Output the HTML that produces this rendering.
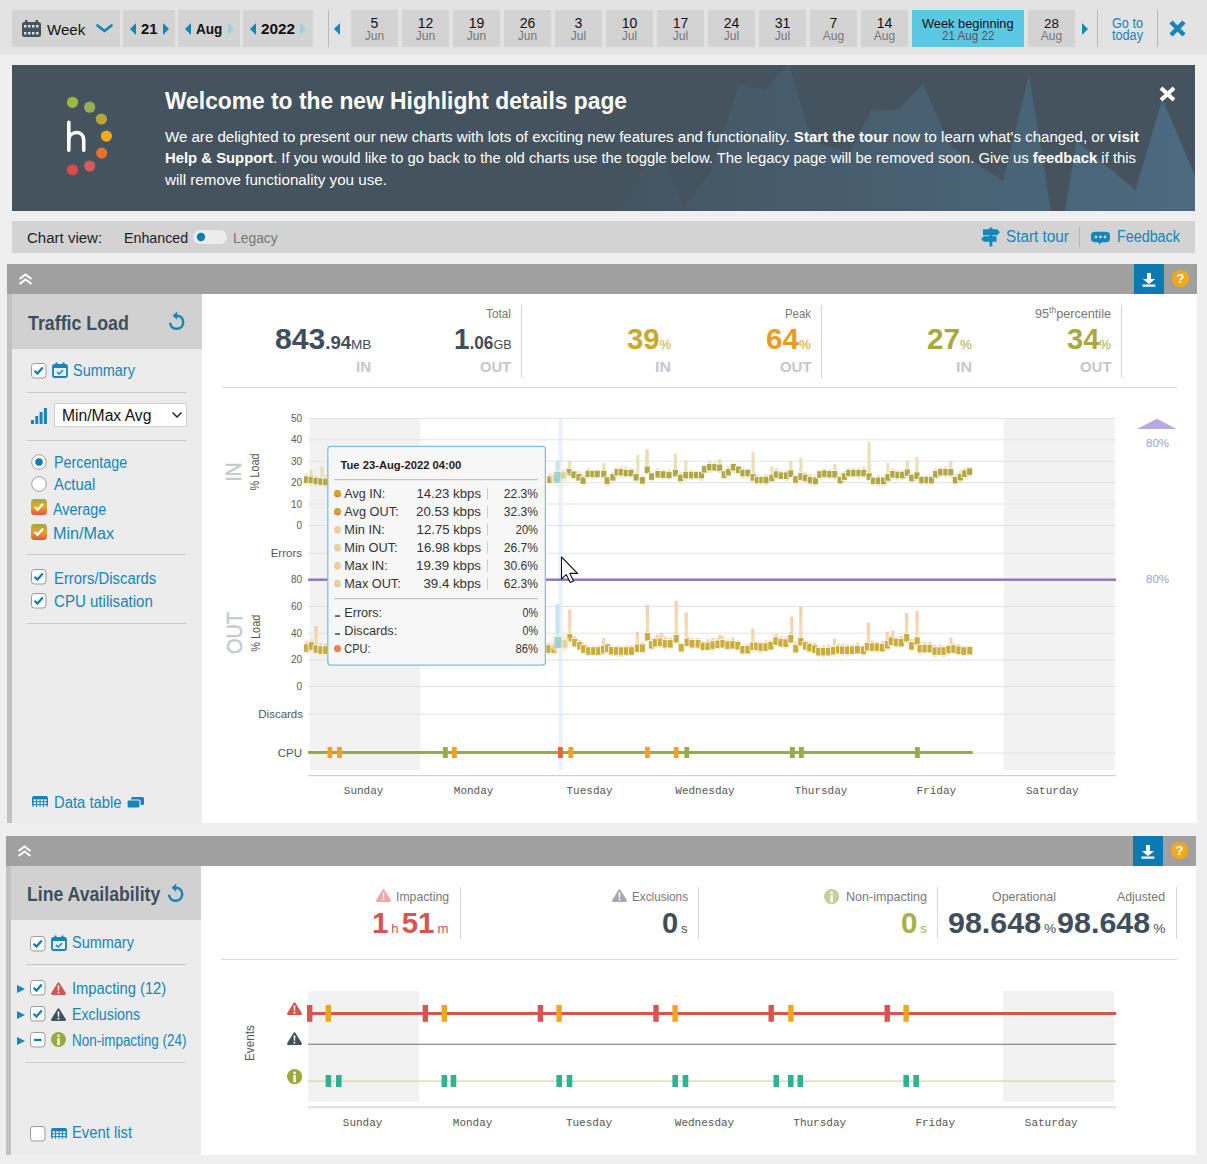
<!DOCTYPE html>
<html><head><meta charset="utf-8"><title>Highlight details</title>
<style>
html,body{margin:0;padding:0;}
body{width:1207px;height:1164px;overflow:hidden;position:relative;background:#efefef;font-family:'Liberation Sans', sans-serif;}
body>div,body>svg{position:absolute;}
b{font-weight:700}
</style></head><body>
<div style="left:0px;top:0px;width:1207px;height:1164px;background:#efefef;"></div>
<div style="left:0px;top:0px;width:1207px;height:55px;background:#e3e3e3;"></div>
<div style="left:12px;top:10px;width:108px;height:37px;background:#d3d3d3;"></div>
<svg style="left:22px;top:20px;" width="19" height="17" viewBox="0 0 19 17"><rect x="0" y="2" width="19" height="15" rx="2.5" fill="#44535e"/><rect x="3" y="0" width="2.5" height="4" fill="#44535e"/><rect x="13.5" y="0" width="2.5" height="4" fill="#44535e"/><rect x="2" y="5" width="2.5" height="2.5" fill="#ddd"/><rect x="2" y="12" width="2.5" height="2.5" fill="#ddd"/><rect x="6" y="5" width="2.5" height="2.5" fill="#ddd"/><rect x="6" y="12" width="2.5" height="2.5" fill="#ddd"/><rect x="10" y="5" width="2.5" height="2.5" fill="#ddd"/><rect x="10" y="12" width="2.5" height="2.5" fill="#ddd"/><rect x="14" y="5" width="2.5" height="2.5" fill="#ddd"/><rect x="14" y="12" width="2.5" height="2.5" fill="#ddd"/></svg>
<div style="left:47.00px;top:21.65px;font:400 15.3px/1 'Liberation Sans', sans-serif;color:#111;white-space:nowrap;transform:scaleX(0.9864);transform-origin:0 0;">Week</div>
<svg style="left:95px;top:23px;" width="19" height="10" viewBox="0 0 19 10"><polyline points="2.5,2.5 9.5,8 16.5,2.5" fill="none" stroke="#1585ba" stroke-width="2.8" stroke-linecap="round" stroke-linejoin="round"/></svg>
<div style="left:123px;top:10px;width:52px;height:37px;background:#d3d3d3;"></div>
<svg style="left:130px;top:23px;" width="6" height="12" viewBox="0 0 6 12"><polygon points="6,0 0,6.0 6,12" fill="#1585ba"/></svg>
<div style="left:140.60px;top:21.25px;font:700 15.3px/1 'Liberation Sans', sans-serif;color:#111;white-space:nowrap;transform:scaleX(0.9638);transform-origin:0 0;">21</div>
<svg style="left:163px;top:23px;" width="6" height="12" viewBox="0 0 6 12"><polygon points="0,0 6,6.0 0,12" fill="#1585ba"/></svg>
<div style="left:178px;top:10px;width:62px;height:37px;background:#d3d3d3;"></div>
<svg style="left:185px;top:23px;" width="6" height="12" viewBox="0 0 6 12"><polygon points="6,0 0,6.0 6,12" fill="#1585ba"/></svg>
<div style="left:195.70px;top:21.25px;font:700 15.3px/1 'Liberation Sans', sans-serif;color:#111;white-space:nowrap;transform:scaleX(0.8840);transform-origin:0 0;">Aug</div>
<svg style="left:228px;top:23px;" width="6" height="12" viewBox="0 0 6 12"><polygon points="0,0 6,6.0 0,12" fill="#9ccde2"/></svg>
<div style="left:243px;top:10px;width:70px;height:37px;background:#d3d3d3;"></div>
<svg style="left:250px;top:23px;" width="6" height="12" viewBox="0 0 6 12"><polygon points="6,0 0,6.0 6,12" fill="#1585ba"/></svg>
<div style="left:261.00px;top:21.25px;font:700 15.3px/1 'Liberation Sans', sans-serif;color:#111;white-space:nowrap;">2022</div>
<svg style="left:300px;top:23px;" width="6" height="12" viewBox="0 0 6 12"><polygon points="0,0 6,6.0 0,12" fill="#9ccde2"/></svg>
<div style="left:328px;top:10px;width:1px;height:37px;background:#b9b9b9;"></div>
<svg style="left:334px;top:23px;" width="6" height="12" viewBox="0 0 6 12"><polygon points="6,0 0,6.0 6,12" fill="#1585ba"/></svg>
<div style="left:351px;top:10px;width:47px;height:37px;background:#d3d3d3;"></div>
<div style="left:370.60px;top:16.15px;font:400 14px/1 'Liberation Sans', sans-serif;color:#111;white-space:nowrap;">5</div>
<div style="left:364.82px;top:30.14px;font:400 12px/1 'Liberation Sans', sans-serif;color:#777;white-space:nowrap;">Jun</div>
<div style="left:402px;top:10px;width:47px;height:37px;background:#d3d3d3;"></div>
<div style="left:417.71px;top:16.15px;font:400 14px/1 'Liberation Sans', sans-serif;color:#111;white-space:nowrap;">12</div>
<div style="left:415.82px;top:30.14px;font:400 12px/1 'Liberation Sans', sans-serif;color:#777;white-space:nowrap;">Jun</div>
<div style="left:453px;top:10px;width:47px;height:37px;background:#d3d3d3;"></div>
<div style="left:468.71px;top:16.15px;font:400 14px/1 'Liberation Sans', sans-serif;color:#111;white-space:nowrap;">19</div>
<div style="left:466.82px;top:30.14px;font:400 12px/1 'Liberation Sans', sans-serif;color:#777;white-space:nowrap;">Jun</div>
<div style="left:504px;top:10px;width:47px;height:37px;background:#d3d3d3;"></div>
<div style="left:519.71px;top:16.15px;font:400 14px/1 'Liberation Sans', sans-serif;color:#111;white-space:nowrap;">26</div>
<div style="left:517.82px;top:30.14px;font:400 12px/1 'Liberation Sans', sans-serif;color:#777;white-space:nowrap;">Jun</div>
<div style="left:555px;top:10px;width:47px;height:37px;background:#d3d3d3;"></div>
<div style="left:574.60px;top:16.15px;font:400 14px/1 'Liberation Sans', sans-serif;color:#111;white-space:nowrap;">3</div>
<div style="left:570.83px;top:30.14px;font:400 12px/1 'Liberation Sans', sans-serif;color:#777;white-space:nowrap;">Jul</div>
<div style="left:606px;top:10px;width:47px;height:37px;background:#d3d3d3;"></div>
<div style="left:621.71px;top:16.15px;font:400 14px/1 'Liberation Sans', sans-serif;color:#111;white-space:nowrap;">10</div>
<div style="left:621.83px;top:30.14px;font:400 12px/1 'Liberation Sans', sans-serif;color:#777;white-space:nowrap;">Jul</div>
<div style="left:657px;top:10px;width:47px;height:37px;background:#d3d3d3;"></div>
<div style="left:672.71px;top:16.15px;font:400 14px/1 'Liberation Sans', sans-serif;color:#111;white-space:nowrap;">17</div>
<div style="left:672.83px;top:30.14px;font:400 12px/1 'Liberation Sans', sans-serif;color:#777;white-space:nowrap;">Jul</div>
<div style="left:708px;top:10px;width:47px;height:37px;background:#d3d3d3;"></div>
<div style="left:723.71px;top:16.15px;font:400 14px/1 'Liberation Sans', sans-serif;color:#111;white-space:nowrap;">24</div>
<div style="left:723.83px;top:30.14px;font:400 12px/1 'Liberation Sans', sans-serif;color:#777;white-space:nowrap;">Jul</div>
<div style="left:759px;top:10px;width:47px;height:37px;background:#d3d3d3;"></div>
<div style="left:774.71px;top:16.15px;font:400 14px/1 'Liberation Sans', sans-serif;color:#111;white-space:nowrap;">31</div>
<div style="left:774.83px;top:30.14px;font:400 12px/1 'Liberation Sans', sans-serif;color:#777;white-space:nowrap;">Jul</div>
<div style="left:810px;top:10px;width:47px;height:37px;background:#d3d3d3;"></div>
<div style="left:829.60px;top:16.15px;font:400 14px/1 'Liberation Sans', sans-serif;color:#111;white-space:nowrap;">7</div>
<div style="left:822.82px;top:30.14px;font:400 12px/1 'Liberation Sans', sans-serif;color:#777;white-space:nowrap;">Aug</div>
<div style="left:861px;top:10px;width:47px;height:37px;background:#d3d3d3;"></div>
<div style="left:876.71px;top:16.15px;font:400 14px/1 'Liberation Sans', sans-serif;color:#111;white-space:nowrap;">14</div>
<div style="left:873.82px;top:30.14px;font:400 12px/1 'Liberation Sans', sans-serif;color:#777;white-space:nowrap;">Aug</div>
<div style="left:912px;top:10px;width:112px;height:37px;background:#5bc8e3;"></div>
<div style="left:921.80px;top:16.57px;font:400 13.5px/1 'Liberation Sans', sans-serif;color:#111;white-space:nowrap;transform:scaleX(0.9485);transform-origin:0 0;">Week beginning</div>
<div style="left:941.60px;top:30.14px;font:400 12px/1 'Liberation Sans', sans-serif;color:#555;white-space:nowrap;transform:scaleX(0.9692);transform-origin:0 0;">21 Aug 22</div>
<div style="left:1028px;top:10px;width:47px;height:37px;background:#d3d3d3;"></div>
<div style="left:1043.98px;top:16.57px;font:400 13.5px/1 'Liberation Sans', sans-serif;color:#111;white-space:nowrap;">28</div>
<div style="left:1040.82px;top:30.14px;font:400 12px/1 'Liberation Sans', sans-serif;color:#777;white-space:nowrap;">Aug</div>
<svg style="left:1082px;top:23px;" width="6" height="12" viewBox="0 0 6 12"><polygon points="0,0 6,6.0 0,12" fill="#1585ba"/></svg>
<div style="left:1097px;top:10px;width:1px;height:37px;background:#b9b9b9;"></div>
<div style="left:1112.00px;top:16.15px;font:400 14px/1 'Liberation Sans', sans-serif;color:#1585ba;white-space:nowrap;transform:scaleX(0.9051);transform-origin:0 0;">Go to</div>
<div style="left:1112.00px;top:27.65px;font:400 14px/1 'Liberation Sans', sans-serif;color:#1585ba;white-space:nowrap;transform:scaleX(0.9051);transform-origin:0 0;">today</div>
<div style="left:1157px;top:10px;width:1px;height:37px;background:#b9b9b9;"></div>
<svg style="left:1168px;top:19px;" width="19" height="19" viewBox="0 0 19 19"><path d="M3,3 L16,16 M16,3 L3,16" stroke="#1585ba" stroke-width="4.5" stroke-linecap="butt"/></svg>
<div style="left:12px;top:65px;width:1183px;height:146px;background:#44535e;overflow:hidden"></div>
<svg style="left:12px;top:65px;" width="1183" height="146" viewBox="0 0 1183 146"><defs><linearGradient id="mg" x1="540" x2="1183" y1="0" y2="0" gradientUnits="userSpaceOnUse"><stop offset="0" stop-color="#517d9c" stop-opacity="0"/><stop offset="1" stop-color="#517d9c" stop-opacity="0.55"/></linearGradient></defs><polygon points="548.0,146.0 605.0,146.0 646.0,82.0 672.0,144.0 699.6,104.4 727.0,19.0 753.0,25.0 777.0,-2.0 795.0,61.0 808.0,79.0 838.0,88.0 859.0,45.5 886.0,45.0 911.0,19.0 938.0,81.0 991.0,116.0 1017.0,10.0 1039.0,146.0 1053.0,146.0 1064.5,76.0 1123.5,125.0 1150.4,34.0 1183.0,111.0 1183.0,146.0" fill="url(#mg)"/></svg>
<svg style="left:60px;top:90px;" width="60" height="90" viewBox="0 0 60 90"><circle cx="12.5" cy="12.299999999999997" r="5.6" fill="#9dba3b"/><circle cx="29.700000000000003" cy="17.200000000000003" r="5.6" fill="#99ad55"/><circle cx="41.400000000000006" cy="29" r="5.6" fill="#b6a63a"/><circle cx="46.400000000000006" cy="46.099999999999994" r="5.6" fill="#f0aa1e"/><circle cx="41.7" cy="63.099999999999994" r="5.6" fill="#e8702a"/><circle cx="29.700000000000003" cy="76" r="5.6" fill="#d65b5b"/><circle cx="12.5" cy="79.80000000000001" r="5.6" fill="#d94a4a"/></svg>
<svg style="left:60px;top:115px;" width="30" height="40" viewBox="0 0 30 40"><path d="M8.8,7.2 V35.2 M8.8,25.5 C8.8,15.5 23.7,14.5 23.7,25 V35.2" stroke="#fff" stroke-width="3.6" stroke-linecap="round" fill="none"/></svg>
<div style="left:165.00px;top:88.76px;font:700 24.5px/1 'Liberation Sans', sans-serif;color:#fff;white-space:nowrap;transform:scaleX(0.9307);transform-origin:0 0;">Welcome to the new Highlight details page</div>
<div style="left:165.00px;top:128.56px;font:400 15.4px/1 'Liberation Sans', sans-serif;color:#fff;white-space:nowrap;transform:scaleX(0.9783);transform-origin:0 0;">We are delighted to present our new charts with lots of exciting new features and functionality. <b>Start the tour</b> now to learn what's changed, or <b>visit</b></div>
<div style="left:165.00px;top:150.46px;font:400 15.4px/1 'Liberation Sans', sans-serif;color:#fff;white-space:nowrap;transform:scaleX(0.9646);transform-origin:0 0;"><b>Help &amp; Support</b>. If you would like to go back to the old charts use the toggle below. The legacy page will be removed soon. Give us <b>feedback</b> if this</div>
<div style="left:165.00px;top:172.36px;font:400 15.4px/1 'Liberation Sans', sans-serif;color:#fff;white-space:nowrap;transform:scaleX(0.9867);transform-origin:0 0;">will remove functionality you use.</div>
<svg style="left:1159px;top:86px;" width="17" height="16" viewBox="0 0 17 16"><path d="M2,2 L15,14 M15,2 L2,14" stroke="#fff" stroke-width="4"/></svg>
<div style="left:12px;top:221px;width:1183px;height:32px;background:#d3d3d3;"></div>
<div style="left:27.30px;top:230.05px;font:400 15.3px/1 'Liberation Sans', sans-serif;color:#222;white-space:nowrap;transform:scaleX(0.9815);transform-origin:0 0;">Chart view:</div>
<div style="left:123.50px;top:230.05px;font:400 15.3px/1 'Liberation Sans', sans-serif;color:#222;white-space:nowrap;transform:scaleX(0.9317);transform-origin:0 0;">Enhanced</div>
<svg style="left:193px;top:230px;" width="34" height="14" viewBox="0 0 34 14"><rect x="0" y="0" width="34" height="14" rx="7" fill="#ececec"/><circle cx="8" cy="7" r="4.2" fill="#0f7db5"/></svg>
<div style="left:233.00px;top:230.05px;font:400 15.3px/1 'Liberation Sans', sans-serif;color:#777;white-space:nowrap;transform:scaleX(0.9062);transform-origin:0 0;">Legacy</div>
<svg style="left:980px;top:226px;" width="22" height="22" viewBox="0 0 22 22"><rect x="9.5" y="1.5" width="2.8" height="19" fill="#1585ba"/><polygon points="3,3.2 17,3.2 20,6.2 17,9.2 3,9.2" fill="#1585ba"/><polygon points="16.5,10.3 4,10.3 1,13 4,15.7 16.5,15.7" fill="#1585ba"/></svg>
<div style="left:1006.40px;top:228.95px;font:400 16px/1 'Liberation Sans', sans-serif;color:#1585ba;white-space:nowrap;transform:scaleX(0.9557);transform-origin:0 0;">Start tour</div>
<div style="left:1079px;top:227px;width:1px;height:20px;background:#b5b5b5;"></div>
<svg style="left:1090px;top:231px;" width="21" height="15" viewBox="0 0 21 15"><rect x="1" y="0.8" width="19" height="10.5" rx="4" fill="#1585ba"/><polygon points="7.5,10 9.5,13.5 12.5,10" fill="#1585ba"/><circle cx="6" cy="6" r="1.4" fill="#d3d3d3"/><circle cx="10.5" cy="6" r="1.4" fill="#d3d3d3"/><circle cx="15" cy="6" r="1.4" fill="#d3d3d3"/></svg>
<div style="left:1116.60px;top:229.45px;font:400 16px/1 'Liberation Sans', sans-serif;color:#1585ba;white-space:nowrap;transform:scaleX(0.8952);transform-origin:0 0;">Feedback</div>
<div style="left:7px;top:264px;width:1190px;height:30px;background:#a0a0a0;"></div>
<svg style="left:18px;top:273px;" width="15" height="12" viewBox="0 0 15 12"><polyline points="1.5,6 7.5,1.5 13.5,6" fill="none" stroke="#fff" stroke-width="2"/><polyline points="1.5,11 7.5,6.5 13.5,11" fill="none" stroke="#fff" stroke-width="2"/></svg>
<div style="left:1134px;top:264px;width:30px;height:30px;background:#0b7ab1;"></div>
<svg style="left:1142px;top:273px;" width="14" height="14" viewBox="0 0 14 14"><rect x="5" y="0" width="4" height="6.3" fill="#fff"/><polygon points="0.8,6 13.2,6 7,11" fill="#fff"/><rect x="0.5" y="11.5" width="12.8" height="2.2" fill="#fff"/></svg>
<svg style="left:1171.0px;top:268.9px;" width="19" height="19" viewBox="0 0 19 19"><circle cx="9.5" cy="9.5" r="8.7" fill="#f2a81d"/></svg>
<div style="left:1176.52px;top:272.19px;font:700 13px/1 'Liberation Sans', sans-serif;color:#fff;white-space:nowrap;">?</div>
<div style="left:7px;top:294px;width:5px;height:529px;background:#c2c2c2;"></div>
<div style="left:12px;top:294px;width:190px;height:529px;background:#ececec;"></div>
<div style="left:12px;top:294px;width:190px;height:55px;background:#d1d1d1;"></div>
<div style="left:202px;top:294px;width:995px;height:529px;background:#fff;"></div>
<div style="left:27.80px;top:313.04px;font:700 20.5px/1 'Liberation Sans', sans-serif;color:#3d4f5c;white-space:nowrap;transform:scaleX(0.8684);transform-origin:0 0;">Traffic Load</div>
<svg style="left:160px;top:305px;" width="35" height="35" viewBox="0 0 35 35"><path d="M10.2,18.8 A6.6,6.6 0 1 0 17.5,10.7" fill="none" stroke="#1585ba" stroke-width="2.5" stroke-linecap="round"/><polygon points="12.6,10.7 17.2,6.6 17.2,14.8" fill="#1585ba"/></svg>
<svg style="left:31px;top:363px;" width="16" height="16" viewBox="0 0 16 16"><rect x="0.5" y="0.5" width="14.5" height="14.5" rx="3" fill="#fff" stroke="#9a9a9a" stroke-width="1"/><polyline points="3.6,7.8 6.4,10.6 11.8,4.6" fill="none" stroke="#0f7db5" stroke-width="2.2"/></svg>
<svg style="left:52px;top:362px;" width="16" height="16" viewBox="0 0 16 16"><rect x="1" y="3" width="14" height="12" rx="1.5" fill="none" stroke="#1585ba" stroke-width="1.8"/><rect x="1" y="3" width="14" height="3" fill="#1585ba"/><rect x="3.5" y="0.5" width="2" height="3.5" fill="#1585ba"/><rect x="10.5" y="0.5" width="2" height="3.5" fill="#1585ba"/><polyline points="5,10 7.2,12 11,8.2" fill="none" stroke="#1585ba" stroke-width="1.5"/></svg>
<div style="left:72.60px;top:362.95px;font:400 16px/1 'Liberation Sans', sans-serif;color:#1585ba;white-space:nowrap;transform:scaleX(0.9043);transform-origin:0 0;">Summary</div>
<div style="left:27px;top:392px;width:159px;height:1px;background:#c8c8c8;"></div>
<svg style="left:31px;top:408px;" width="16" height="16" viewBox="0 0 16 16"><rect x="0" y="12" width="3" height="4" fill="#1585ba"/><rect x="4.3" y="8" width="3" height="8" fill="#1585ba"/><rect x="8.6" y="4" width="3" height="12" fill="#1585ba"/><rect x="12.9" y="0" width="3" height="16" fill="#1585ba"/></svg>
<div style="left:54px;top:403px;width:131px;height:22px;background:#fff;border:1px solid #cfcfcf"></div>
<div style="left:61.60px;top:408.45px;font:400 16px/1 'Liberation Sans', sans-serif;color:#111;white-space:nowrap;transform:scaleX(0.9792);transform-origin:0 0;">Min/Max Avg</div>
<svg style="left:171px;top:411px;" width="12" height="8" viewBox="0 0 12 8"><polyline points="1.5,1.5 6,6 10.5,1.5" fill="none" stroke="#222" stroke-width="1.5"/></svg>
<div style="left:27px;top:440px;width:159px;height:1px;background:#c8c8c8;"></div>
<svg style="left:30.799999999999997px;top:454px;" width="16" height="16" viewBox="0 0 16 16"><circle cx="8" cy="8" r="7.3" fill="#fff" stroke="#a0a0a0" stroke-width="1"/><circle cx="8" cy="8" r="3.8" fill="#0f7db5"/></svg>
<div style="left:54.10px;top:454.85px;font:400 16px/1 'Liberation Sans', sans-serif;color:#1585ba;white-space:nowrap;transform:scaleX(0.8932);transform-origin:0 0;">Percentage</div>
<svg style="left:30.799999999999997px;top:476px;" width="16" height="16" viewBox="0 0 16 16"><circle cx="8" cy="8" r="7.3" fill="#fff" stroke="#a0a0a0" stroke-width="1"/></svg>
<div style="left:54.10px;top:476.75px;font:400 16px/1 'Liberation Sans', sans-serif;color:#1585ba;white-space:nowrap;transform:scaleX(0.9287);transform-origin:0 0;">Actual</div>
<svg style="left:31px;top:499px;" width="16" height="16" viewBox="0 0 16 16"><defs><linearGradient id="cg" x1="0" x2="0" y1="0" y2="1"><stop offset="0" stop-color="#9aad40"/><stop offset="0.5" stop-color="#f1a31f"/><stop offset="1" stop-color="#de5345"/></linearGradient></defs><rect x="0" y="0" width="16" height="16" rx="3.5" fill="url(#cg)"/><polyline points="3.8,8 6.6,10.8 12,4.8" fill="none" stroke="#fff" stroke-width="2.3"/></svg>
<div style="left:52.90px;top:501.65px;font:400 16px/1 'Liberation Sans', sans-serif;color:#1585ba;white-space:nowrap;transform:scaleX(0.8953);transform-origin:0 0;">Average</div>
<svg style="left:31px;top:524px;" width="16" height="16" viewBox="0 0 16 16"><defs><linearGradient id="cg" x1="0" x2="0" y1="0" y2="1"><stop offset="0" stop-color="#9aad40"/><stop offset="0.5" stop-color="#f1a31f"/><stop offset="1" stop-color="#de5345"/></linearGradient></defs><rect x="0" y="0" width="16" height="16" rx="3.5" fill="url(#cg)"/><polyline points="3.8,8 6.6,10.8 12,4.8" fill="none" stroke="#fff" stroke-width="2.3"/></svg>
<div style="left:52.90px;top:525.65px;font:400 16px/1 'Liberation Sans', sans-serif;color:#1585ba;white-space:nowrap;transform:scaleX(1.0090);transform-origin:0 0;">Min/Max</div>
<div style="left:27px;top:554px;width:159px;height:1px;background:#c8c8c8;"></div>
<svg style="left:31px;top:569px;" width="16" height="16" viewBox="0 0 16 16"><rect x="0.5" y="0.5" width="14.5" height="14.5" rx="3" fill="#fff" stroke="#9a9a9a" stroke-width="1"/><polyline points="3.6,7.8 6.4,10.6 11.8,4.6" fill="none" stroke="#0f7db5" stroke-width="2.2"/></svg>
<div style="left:54.10px;top:571.25px;font:400 16px/1 'Liberation Sans', sans-serif;color:#1585ba;white-space:nowrap;transform:scaleX(0.9280);transform-origin:0 0;">Errors/Discards</div>
<svg style="left:31px;top:593px;" width="16" height="16" viewBox="0 0 16 16"><rect x="0.5" y="0.5" width="14.5" height="14.5" rx="3" fill="#fff" stroke="#9a9a9a" stroke-width="1"/><polyline points="3.6,7.8 6.4,10.6 11.8,4.6" fill="none" stroke="#0f7db5" stroke-width="2.2"/></svg>
<div style="left:53.80px;top:594.45px;font:400 16px/1 'Liberation Sans', sans-serif;color:#1585ba;white-space:nowrap;transform:scaleX(0.9415);transform-origin:0 0;">CPU utilisation</div>
<div style="left:27px;top:623px;width:159px;height:1px;background:#c8c8c8;"></div>
<svg style="left:32px;top:796px;" width="16" height="11" viewBox="0 0 16 11"><rect x="0" y="0" width="16" height="11" rx="2" fill="#1585ba"/><rect x="1.5" y="3.3" width="2.6" height="1.9" fill="#ececec"/><rect x="5.0" y="3.3" width="2.6" height="1.9" fill="#ececec"/><rect x="8.5" y="3.3" width="2.6" height="1.9" fill="#ececec"/><rect x="12.0" y="3.3" width="2.6" height="1.9" fill="#ececec"/><rect x="1.5" y="6.2" width="2.6" height="1.9" fill="#ececec"/><rect x="5.0" y="6.2" width="2.6" height="1.9" fill="#ececec"/><rect x="8.5" y="6.2" width="2.6" height="1.9" fill="#ececec"/><rect x="12.0" y="6.2" width="2.6" height="1.9" fill="#ececec"/><rect x="1.5" y="9.1" width="2.6" height="1.9" fill="#ececec"/><rect x="5.0" y="9.1" width="2.6" height="1.9" fill="#ececec"/><rect x="8.5" y="9.1" width="2.6" height="1.9" fill="#ececec"/><rect x="12.0" y="9.1" width="2.6" height="1.9" fill="#ececec"/></svg>
<div style="left:54.10px;top:794.95px;font:400 16px/1 'Liberation Sans', sans-serif;color:#1585ba;white-space:nowrap;transform:scaleX(0.9254);transform-origin:0 0;">Data table</div>
<svg style="left:127px;top:797px;" width="17" height="11" viewBox="0 0 17 11"><rect x="4" y="0" width="13" height="8" rx="1.5" fill="#1585ba"/><rect x="0" y="3" width="13" height="8" rx="1.5" fill="#1585ba" stroke="#ececec" stroke-width="1.2"/></svg>
<div style="left:274.60px;top:323.60px;font:700 30px/1 'Liberation Sans', sans-serif;color:#3f4e5a;white-space:nowrap;transform:scaleX(1.0038);transform-origin:0 0;">843<span style="font-size:18.5px">.94</span><span style="font-size:13.5px;font-weight:400">MB</span></div>
<div style="left:356.00px;top:360.22px;font:700 14.5px/1 'Liberation Sans', sans-serif;color:#c3c8cc;white-space:nowrap;transform:scaleX(1.0345);transform-origin:0 0;">IN</div>
<div style="left:453.50px;top:323.60px;font:700 30px/1 'Liberation Sans', sans-serif;color:#3f4e5a;white-space:nowrap;transform:scaleX(0.9286);transform-origin:0 0;">1<span style="font-size:18.5px">.06</span><span style="font-size:13.5px;font-weight:400">GB</span></div>
<div style="left:480.00px;top:360.22px;font:700 14.5px/1 'Liberation Sans', sans-serif;color:#c3c8cc;white-space:nowrap;transform:scaleX(1.0128);transform-origin:0 0;">OUT</div>
<div style="left:486.00px;top:306.57px;font:400 13.5px/1 'Liberation Sans', sans-serif;color:#777;white-space:nowrap;transform:scaleX(0.8762);transform-origin:0 0;">Total</div>
<div style="left:521px;top:305px;width:1px;height:73px;background:#d5d5d5;"></div>
<div style="left:626.70px;top:323.60px;font:700 30px/1 'Liberation Sans', sans-serif;color:#c9a82c;white-space:nowrap;transform:scaleX(0.9760);transform-origin:0 0;">39<span style="font-size:18.5px"></span><span style="font-size:13.5px;font-weight:400">%</span></div>
<div style="left:655.00px;top:360.22px;font:700 14.5px/1 'Liberation Sans', sans-serif;color:#c3c8cc;white-space:nowrap;transform:scaleX(1.1034);transform-origin:0 0;">IN</div>
<div style="left:766.30px;top:323.60px;font:700 30px/1 'Liberation Sans', sans-serif;color:#ec9a1d;white-space:nowrap;transform:scaleX(0.9914);transform-origin:0 0;">64<span style="font-size:18.5px"></span><span style="font-size:13.5px;font-weight:400">%</span></div>
<div style="left:779.80px;top:360.22px;font:700 14.5px/1 'Liberation Sans', sans-serif;color:#c3c8cc;white-space:nowrap;transform:scaleX(1.0291);transform-origin:0 0;">OUT</div>
<div style="left:785.30px;top:306.57px;font:400 13.5px/1 'Liberation Sans', sans-serif;color:#777;white-space:nowrap;transform:scaleX(0.8447);transform-origin:0 0;">Peak</div>
<div style="left:821px;top:305px;width:1px;height:73px;background:#d5d5d5;"></div>
<div style="left:926.80px;top:323.60px;font:700 30px/1 'Liberation Sans', sans-serif;color:#a9a83b;white-space:nowrap;transform:scaleX(0.9914);transform-origin:0 0;">27<span style="font-size:18.5px"></span><span style="font-size:13.5px;font-weight:400">%</span></div>
<div style="left:955.80px;top:360.22px;font:700 14.5px/1 'Liberation Sans', sans-serif;color:#c3c8cc;white-space:nowrap;transform:scaleX(1.1034);transform-origin:0 0;">IN</div>
<div style="left:1067.00px;top:323.60px;font:700 30px/1 'Liberation Sans', sans-serif;color:#a9a83b;white-space:nowrap;transform:scaleX(0.9694);transform-origin:0 0;">34<span style="font-size:18.5px"></span><span style="font-size:13.5px;font-weight:400">%</span></div>
<div style="left:1079.50px;top:360.22px;font:700 14.5px/1 'Liberation Sans', sans-serif;color:#c3c8cc;white-space:nowrap;transform:scaleX(1.0291);transform-origin:0 0;">OUT</div>
<div style="left:1035.00px;top:306.57px;font:400 13.5px/1 'Liberation Sans', sans-serif;color:#777;white-space:nowrap;transform:scaleX(0.9372);transform-origin:0 0;">95<sup style="font-size:9px;vertical-align:5px;line-height:0">th</sup>percentile</div>
<div style="left:1121px;top:305px;width:1px;height:73px;background:#d5d5d5;"></div>
<div style="left:222px;top:387px;width:955px;height:1px;background:#d8d8d8;"></div>
<svg style="left:202px;top:294px" width="995" height="529" viewBox="202 294 995 529"><rect x="309.7" y="418" width="110.7" height="352" fill="#f2f2f2"/><rect x="1003.6" y="418" width="111" height="352" fill="#f2f2f2"/><rect x="558.5" y="418" width="4" height="352" fill="#e6eef8" opacity="0.8"/><rect x="308" y="524.9" width="808" height="1" fill="#e3e3e3"/><text x="302" y="528.9" font-family="'Liberation Sans', sans-serif" font-size="10" fill="#5a5a5a" text-anchor="end" font-weight="400" >0</text><rect x="308" y="503.5" width="808" height="1" fill="#e3e3e3"/><text x="302" y="507.5" font-family="'Liberation Sans', sans-serif" font-size="10" fill="#5a5a5a" text-anchor="end" font-weight="400" >10</text><rect x="308" y="482.1" width="808" height="1" fill="#e3e3e3"/><text x="302" y="486.09999999999997" font-family="'Liberation Sans', sans-serif" font-size="10" fill="#5a5a5a" text-anchor="end" font-weight="400" >20</text><rect x="308" y="460.7" width="808" height="1" fill="#e3e3e3"/><text x="302" y="464.7" font-family="'Liberation Sans', sans-serif" font-size="10" fill="#5a5a5a" text-anchor="end" font-weight="400" >30</text><rect x="308" y="439.3" width="808" height="1" fill="#e3e3e3"/><text x="302" y="443.29999999999995" font-family="'Liberation Sans', sans-serif" font-size="10" fill="#5a5a5a" text-anchor="end" font-weight="400" >40</text><rect x="308" y="417.9" width="808" height="1" fill="#e3e3e3"/><text x="302" y="421.9" font-family="'Liberation Sans', sans-serif" font-size="10" fill="#5a5a5a" text-anchor="end" font-weight="400" >50</text><rect x="308" y="552.7" width="808" height="1" fill="#e3e3e3"/><rect x="308" y="713.7" width="808" height="1" fill="#e3e3e3"/><rect x="308" y="752.5" width="808" height="1" fill="#e3e3e3"/><rect x="308" y="686.0" width="808" height="1" fill="#e3e3e3"/><text x="302" y="690.0" font-family="'Liberation Sans', sans-serif" font-size="10" fill="#5a5a5a" text-anchor="end" font-weight="400" >0</text><rect x="308" y="659.4" width="808" height="1" fill="#e3e3e3"/><text x="302" y="663.35" font-family="'Liberation Sans', sans-serif" font-size="10" fill="#5a5a5a" text-anchor="end" font-weight="400" >20</text><rect x="308" y="632.7" width="808" height="1" fill="#e3e3e3"/><text x="302" y="636.7" font-family="'Liberation Sans', sans-serif" font-size="10" fill="#5a5a5a" text-anchor="end" font-weight="400" >40</text><rect x="308" y="606.0" width="808" height="1" fill="#e3e3e3"/><text x="302" y="610.05" font-family="'Liberation Sans', sans-serif" font-size="10" fill="#5a5a5a" text-anchor="end" font-weight="400" >60</text><text x="302" y="583.4" font-family="'Liberation Sans', sans-serif" font-size="10" fill="#5a5a5a" text-anchor="end" font-weight="400" >80</text><text x="302" y="557" font-family="'Liberation Sans', sans-serif" font-size="11.5" fill="#555" text-anchor="end" font-weight="400" >Errors</text><text x="303" y="718" font-family="'Liberation Sans', sans-serif" font-size="11.5" fill="#555" text-anchor="end" font-weight="400" >Discards</text><text x="302" y="756.5" font-family="'Liberation Sans', sans-serif" font-size="11.5" fill="#555" text-anchor="end" font-weight="400" >CPU</text><rect x="308" y="775" width="808" height="1.2" fill="#cfcfcf"/><text x="363.6" y="794" font-family="'Liberation Mono', monospace" font-size="11" fill="#555" text-anchor="middle" font-weight="400" >Sunday</text><text x="473.6" y="794" font-family="'Liberation Mono', monospace" font-size="11" fill="#555" text-anchor="middle" font-weight="400" >Monday</text><text x="589.6" y="794" font-family="'Liberation Mono', monospace" font-size="11" fill="#555" text-anchor="middle" font-weight="400" >Tuesday</text><text x="705" y="794" font-family="'Liberation Mono', monospace" font-size="11" fill="#555" text-anchor="middle" font-weight="400" >Wednesday</text><text x="821" y="794" font-family="'Liberation Mono', monospace" font-size="11" fill="#555" text-anchor="middle" font-weight="400" >Thursday</text><text x="936.3" y="794" font-family="'Liberation Mono', monospace" font-size="11" fill="#555" text-anchor="middle" font-weight="400" >Friday</text><text x="1052.3" y="794" font-family="'Liberation Mono', monospace" font-size="11" fill="#555" text-anchor="middle" font-weight="400" >Saturday</text><text transform="translate(241.2,481.5) rotate(-90)" font-family="'Liberation Sans', sans-serif" font-size="22.7" font-weight="400" fill="#c3cad0" stroke="#c3cad0" stroke-width="0.5" textLength="19" lengthAdjust="spacingAndGlyphs">IN</text><text transform="translate(258.6,490.4) rotate(-90)" font-family="'Liberation Sans', sans-serif" font-size="12" fill="#555" textLength="37" lengthAdjust="spacingAndGlyphs">% Load</text><text transform="translate(242,654) rotate(-90)" font-family="'Liberation Sans', sans-serif" font-size="22" font-weight="400" fill="#c3cad0" stroke="#c3cad0" stroke-width="0.5" textLength="42" lengthAdjust="spacingAndGlyphs">OUT</text><text transform="translate(259.7,651.7) rotate(-90)" font-family="'Liberation Sans', sans-serif" font-size="12" fill="#555" textLength="37" lengthAdjust="spacingAndGlyphs">% Load</text><defs><linearGradient id="og" x1="0" x2="0" y1="0" y2="1"><stop offset="0" stop-color="#f5c4a0"/><stop offset="1" stop-color="#f1dea6"/></linearGradient></defs><rect x="304.9" y="473.7" width="3.2" height="11.2" fill="#e8dcaa" opacity="0.8"/><rect x="309.7" y="473.8" width="3.2" height="11.9" fill="#e8dcaa" opacity="0.8"/><rect x="314.5" y="474.9" width="3.2" height="11.7" fill="#e8dcaa" opacity="0.8"/><rect x="319.3" y="477.2" width="3.2" height="9.3" fill="#e8dcaa" opacity="0.8"/><rect x="324.1" y="475.4" width="3.2" height="11.8" fill="#e8dcaa" opacity="0.8"/><rect x="548.3" y="473.2" width="3.2" height="10.9" fill="#e8dcaa" opacity="0.8"/><rect x="554.1" y="472.6" width="3.2" height="10.0" fill="#e8dcaa" opacity="0.8"/><rect x="561.6" y="470.0" width="3.2" height="10.7" fill="#e8dcaa" opacity="0.8"/><rect x="567.4" y="468.0" width="3.2" height="8.9" fill="#e8dcaa" opacity="0.8"/><rect x="572.4" y="469.8" width="3.2" height="10.6" fill="#e8dcaa" opacity="0.8"/><rect x="577.3" y="471.1" width="3.2" height="10.7" fill="#e8dcaa" opacity="0.8"/><rect x="581.5" y="474.3" width="3.2" height="10.7" fill="#e8dcaa" opacity="0.8"/><rect x="586.5" y="468.1" width="3.2" height="10.2" fill="#e8dcaa" opacity="0.8"/><rect x="591.4" y="469.7" width="3.2" height="9.8" fill="#e8dcaa" opacity="0.8"/><rect x="595.6" y="469.1" width="3.2" height="9.3" fill="#e8dcaa" opacity="0.8"/><rect x="602.2" y="467.2" width="3.2" height="12.3" fill="#e8dcaa" opacity="0.8"/><rect x="605.5" y="475.6" width="3.2" height="10.7" fill="#e8dcaa" opacity="0.8"/><rect x="611.3" y="471.6" width="3.2" height="10.9" fill="#e8dcaa" opacity="0.8"/><rect x="615.5" y="467.5" width="3.2" height="10.4" fill="#e8dcaa" opacity="0.8"/><rect x="619.6" y="466.3" width="3.2" height="11.7" fill="#e8dcaa" opacity="0.8"/><rect x="624.6" y="466.6" width="3.2" height="11.2" fill="#e8dcaa" opacity="0.8"/><rect x="629.5" y="467.9" width="3.2" height="9.7" fill="#e8dcaa" opacity="0.8"/><rect x="634.5" y="472.6" width="3.2" height="9.0" fill="#e8dcaa" opacity="0.8"/><rect x="640.7" y="475.3" width="3.2" height="10.2" fill="#e8dcaa" opacity="0.8"/><rect x="645.6" y="465.6" width="3.2" height="9.5" fill="#e8dcaa" opacity="0.8"/><rect x="650.0" y="471.4" width="3.2" height="9.8" fill="#e8dcaa" opacity="0.8"/><rect x="656.4" y="467.9" width="3.2" height="11.3" fill="#e8dcaa" opacity="0.8"/><rect x="661.6" y="469.5" width="3.2" height="10.0" fill="#e8dcaa" opacity="0.8"/><rect x="667.4" y="469.1" width="3.2" height="10.3" fill="#e8dcaa" opacity="0.8"/><rect x="673.8" y="466.4" width="3.2" height="11.0" fill="#e8dcaa" opacity="0.8"/><rect x="679.0" y="471.9" width="3.2" height="11.6" fill="#e8dcaa" opacity="0.8"/><rect x="684.2" y="470.8" width="3.2" height="9.7" fill="#e8dcaa" opacity="0.8"/><rect x="690.0" y="469.9" width="3.2" height="10.3" fill="#e8dcaa" opacity="0.8"/><rect x="694.9" y="470.8" width="3.2" height="8.6" fill="#e8dcaa" opacity="0.8"/><rect x="699.9" y="470.4" width="3.2" height="10.4" fill="#e8dcaa" opacity="0.8"/><rect x="702.8" y="464.5" width="3.2" height="10.1" fill="#e8dcaa" opacity="0.8"/><rect x="708.0" y="460.7" width="3.2" height="12.2" fill="#e8dcaa" opacity="0.8"/><rect x="713.2" y="462.1" width="3.2" height="9.9" fill="#e8dcaa" opacity="0.8"/><rect x="718.1" y="462.3" width="3.2" height="11.0" fill="#e8dcaa" opacity="0.8"/><rect x="722.5" y="470.0" width="3.2" height="9.9" fill="#e8dcaa" opacity="0.8"/><rect x="726.8" y="465.9" width="3.2" height="11.8" fill="#e8dcaa" opacity="0.8"/><rect x="731.8" y="462.9" width="3.2" height="10.0" fill="#e8dcaa" opacity="0.8"/><rect x="737.0" y="465.4" width="3.2" height="9.2" fill="#e8dcaa" opacity="0.8"/><rect x="741.3" y="467.3" width="3.2" height="11.4" fill="#e8dcaa" opacity="0.8"/><rect x="746.3" y="468.0" width="3.2" height="10.7" fill="#e8dcaa" opacity="0.8"/><rect x="751.5" y="471.8" width="3.2" height="10.3" fill="#e8dcaa" opacity="0.8"/><rect x="755.8" y="475.0" width="3.2" height="9.6" fill="#e8dcaa" opacity="0.8"/><rect x="760.2" y="475.6" width="3.2" height="8.9" fill="#e8dcaa" opacity="0.8"/><rect x="764.5" y="474.0" width="3.2" height="11.7" fill="#e8dcaa" opacity="0.8"/><rect x="770.3" y="473.3" width="3.2" height="9.0" fill="#e8dcaa" opacity="0.8"/><rect x="774.7" y="467.8" width="3.2" height="11.8" fill="#e8dcaa" opacity="0.8"/><rect x="779.6" y="470.4" width="3.2" height="9.9" fill="#e8dcaa" opacity="0.8"/><rect x="784.8" y="469.9" width="3.2" height="11.2" fill="#e8dcaa" opacity="0.8"/><rect x="789.2" y="468.2" width="3.2" height="10.3" fill="#e8dcaa" opacity="0.8"/><rect x="794.1" y="475.0" width="3.2" height="10.0" fill="#e8dcaa" opacity="0.8"/><rect x="799.3" y="472.2" width="3.2" height="9.3" fill="#e8dcaa" opacity="0.8"/><rect x="803.7" y="471.6" width="3.2" height="10.8" fill="#e8dcaa" opacity="0.8"/><rect x="808.6" y="473.9" width="3.2" height="11.8" fill="#e8dcaa" opacity="0.8"/><rect x="813.8" y="475.1" width="3.2" height="11.3" fill="#e8dcaa" opacity="0.8"/><rect x="818.2" y="470.0" width="3.2" height="9.4" fill="#e8dcaa" opacity="0.8"/><rect x="823.1" y="469.0" width="3.2" height="10.1" fill="#e8dcaa" opacity="0.8"/><rect x="828.3" y="469.2" width="3.2" height="9.9" fill="#e8dcaa" opacity="0.8"/><rect x="833.2" y="467.5" width="3.2" height="12.3" fill="#e8dcaa" opacity="0.8"/><rect x="838.5" y="473.3" width="3.2" height="11.6" fill="#e8dcaa" opacity="0.8"/><rect x="842.8" y="471.1" width="3.2" height="10.8" fill="#e8dcaa" opacity="0.8"/><rect x="847.2" y="467.6" width="3.2" height="10.1" fill="#e8dcaa" opacity="0.8"/><rect x="852.1" y="467.8" width="3.2" height="9.7" fill="#e8dcaa" opacity="0.8"/><rect x="857.3" y="467.9" width="3.2" height="10.9" fill="#e8dcaa" opacity="0.8"/><rect x="862.2" y="466.4" width="3.2" height="11.8" fill="#e8dcaa" opacity="0.8"/><rect x="867.5" y="471.0" width="3.2" height="10.3" fill="#e8dcaa" opacity="0.8"/><rect x="871.8" y="476.4" width="3.2" height="9.1" fill="#e8dcaa" opacity="0.8"/><rect x="876.7" y="474.7" width="3.2" height="11.8" fill="#e8dcaa" opacity="0.8"/><rect x="881.9" y="475.7" width="3.2" height="10.6" fill="#e8dcaa" opacity="0.8"/><rect x="886.3" y="471.2" width="3.2" height="11.5" fill="#e8dcaa" opacity="0.8"/><rect x="891.2" y="468.3" width="3.2" height="11.3" fill="#e8dcaa" opacity="0.8"/><rect x="896.4" y="469.9" width="3.2" height="10.5" fill="#e8dcaa" opacity="0.8"/><rect x="900.8" y="470.1" width="3.2" height="9.9" fill="#e8dcaa" opacity="0.8"/><rect x="905.7" y="466.6" width="3.2" height="11.5" fill="#e8dcaa" opacity="0.8"/><rect x="910.1" y="473.0" width="3.2" height="10.7" fill="#e8dcaa" opacity="0.8"/><rect x="915.3" y="469.8" width="3.2" height="11.0" fill="#e8dcaa" opacity="0.8"/><rect x="920.2" y="475.7" width="3.2" height="9.3" fill="#e8dcaa" opacity="0.8"/><rect x="925.4" y="475.1" width="3.2" height="10.1" fill="#e8dcaa" opacity="0.8"/><rect x="929.8" y="474.6" width="3.2" height="10.9" fill="#e8dcaa" opacity="0.8"/><rect x="934.1" y="468.4" width="3.2" height="11.3" fill="#e8dcaa" opacity="0.8"/><rect x="939.1" y="467.1" width="3.2" height="10.3" fill="#e8dcaa" opacity="0.8"/><rect x="944.3" y="466.1" width="3.2" height="11.6" fill="#e8dcaa" opacity="0.8"/><rect x="949.2" y="467.1" width="3.2" height="10.6" fill="#e8dcaa" opacity="0.8"/><rect x="953.6" y="473.6" width="3.2" height="11.7" fill="#e8dcaa" opacity="0.8"/><rect x="958.8" y="470.4" width="3.2" height="12.4" fill="#e8dcaa" opacity="0.8"/><rect x="963.1" y="468.1" width="3.2" height="10.6" fill="#e8dcaa" opacity="0.8"/><rect x="968.1" y="466.9" width="3.2" height="10.2" fill="#e8dcaa" opacity="0.8"/><rect x="568.2" y="460.7" width="3.2" height="11.6" fill="#e8dcaa" opacity="0.85"/><rect x="602.2" y="463.1" width="3.2" height="10.8" fill="#e8dcaa" opacity="0.85"/><rect x="636.2" y="454.9" width="3.2" height="22.4" fill="#e8dcaa" opacity="0.85"/><rect x="645.3" y="449.9" width="3.2" height="20.0" fill="#e8dcaa" opacity="0.85"/><rect x="645.6" y="449.0" width="3.2" height="20.9" fill="#e8dcaa" opacity="0.85"/><rect x="673.8" y="453.9" width="3.2" height="19.1" fill="#e8dcaa" opacity="0.85"/><rect x="684.2" y="460.6" width="3.2" height="14.5" fill="#e8dcaa" opacity="0.85"/><rect x="718.1" y="459.1" width="3.2" height="8.7" fill="#e8dcaa" opacity="0.85"/><rect x="751.5" y="451.9" width="3.2" height="25.5" fill="#e8dcaa" opacity="0.85"/><rect x="770.3" y="466.4" width="3.2" height="11.6" fill="#e8dcaa" opacity="0.85"/><rect x="789.2" y="460.6" width="3.2" height="13.0" fill="#e8dcaa" opacity="0.85"/><rect x="799.3" y="457.7" width="3.2" height="18.8" fill="#e8dcaa" opacity="0.85"/><rect x="833.2" y="464.1" width="3.2" height="10.1" fill="#e8dcaa" opacity="0.85"/><rect x="867.5" y="441.7" width="3.2" height="34.8" fill="#e8dcaa" opacity="0.85"/><rect x="886.3" y="462.9" width="3.2" height="14.5" fill="#e8dcaa" opacity="0.85"/><rect x="905.7" y="460.6" width="3.2" height="12.2" fill="#e8dcaa" opacity="0.85"/><rect x="915.3" y="457.1" width="3.2" height="18.6" fill="#e8dcaa" opacity="0.85"/><rect x="949.2" y="460.6" width="3.2" height="11.6" fill="#e8dcaa" opacity="0.85"/><rect x="309.4" y="470.0" width="3.2" height="10.0" fill="#e8dcaa" opacity="0.85"/><rect x="320.4" y="466.0" width="3.2" height="15.5" fill="#e8dcaa" opacity="0.85"/><rect x="303.5" y="475.8" width="6" height="7.5" fill="#b0a845" stroke="#fff" stroke-width="0.9" stroke-opacity="0.85"/><rect x="308.3" y="476.2" width="6" height="7.5" fill="#b0a845" stroke="#fff" stroke-width="0.9" stroke-opacity="0.85"/><rect x="313.1" y="477.2" width="6" height="7.5" fill="#b0a845" stroke="#fff" stroke-width="0.9" stroke-opacity="0.85"/><rect x="317.9" y="477.8" width="6" height="7.5" fill="#b0a845" stroke="#fff" stroke-width="0.9" stroke-opacity="0.85"/><rect x="322.7" y="478.2" width="6" height="7.5" fill="#b0a845" stroke="#fff" stroke-width="0.9" stroke-opacity="0.85"/><rect x="546.9" y="476.0" width="6" height="7.5" fill="#b0a845" stroke="#fff" stroke-width="0.9" stroke-opacity="0.85"/><rect x="552.7" y="474.3" width="6" height="7.5" fill="#b0a845" stroke="#fff" stroke-width="0.9" stroke-opacity="0.85"/><rect x="560.2" y="471.8" width="6" height="7.5" fill="#b0a845" stroke="#fff" stroke-width="0.9" stroke-opacity="0.85"/><rect x="566.0" y="468.5" width="6" height="7.5" fill="#b0a845" stroke="#fff" stroke-width="0.9" stroke-opacity="0.85"/><rect x="571.0" y="471.0" width="6" height="7.5" fill="#b0a845" stroke="#fff" stroke-width="0.9" stroke-opacity="0.85"/><rect x="575.9" y="473.5" width="6" height="7.5" fill="#b0a845" stroke="#fff" stroke-width="0.9" stroke-opacity="0.85"/><rect x="580.1" y="476.8" width="6" height="7.5" fill="#b0a845" stroke="#fff" stroke-width="0.9" stroke-opacity="0.85"/><rect x="585.1" y="470.2" width="6" height="7.5" fill="#b0a845" stroke="#fff" stroke-width="0.9" stroke-opacity="0.85"/><rect x="590.0" y="470.2" width="6" height="7.5" fill="#b0a845" stroke="#fff" stroke-width="0.9" stroke-opacity="0.85"/><rect x="594.2" y="470.2" width="6" height="7.5" fill="#b0a845" stroke="#fff" stroke-width="0.9" stroke-opacity="0.85"/><rect x="600.8" y="470.2" width="6" height="7.5" fill="#b0a845" stroke="#fff" stroke-width="0.9" stroke-opacity="0.85"/><rect x="604.1" y="476.8" width="6" height="7.5" fill="#b0a845" stroke="#fff" stroke-width="0.9" stroke-opacity="0.85"/><rect x="609.9" y="473.5" width="6" height="7.5" fill="#b0a845" stroke="#fff" stroke-width="0.9" stroke-opacity="0.85"/><rect x="614.1" y="468.5" width="6" height="7.5" fill="#b0a845" stroke="#fff" stroke-width="0.9" stroke-opacity="0.85"/><rect x="618.2" y="468.5" width="6" height="7.5" fill="#b0a845" stroke="#fff" stroke-width="0.9" stroke-opacity="0.85"/><rect x="623.2" y="469.3" width="6" height="7.5" fill="#b0a845" stroke="#fff" stroke-width="0.9" stroke-opacity="0.85"/><rect x="628.1" y="469.3" width="6" height="7.5" fill="#b0a845" stroke="#fff" stroke-width="0.9" stroke-opacity="0.85"/><rect x="633.1" y="473.5" width="6" height="7.5" fill="#b0a845" stroke="#fff" stroke-width="0.9" stroke-opacity="0.85"/><rect x="639.3" y="476.6" width="6" height="7.5" fill="#b0a845" stroke="#fff" stroke-width="0.9" stroke-opacity="0.85"/><rect x="644.2" y="466.1" width="6" height="7.5" fill="#b0a845" stroke="#fff" stroke-width="0.9" stroke-opacity="0.85"/><rect x="648.6" y="472.8" width="6" height="7.5" fill="#b0a845" stroke="#fff" stroke-width="0.9" stroke-opacity="0.85"/><rect x="655.0" y="470.5" width="6" height="7.5" fill="#b0a845" stroke="#fff" stroke-width="0.9" stroke-opacity="0.85"/><rect x="660.2" y="470.8" width="6" height="7.5" fill="#b0a845" stroke="#fff" stroke-width="0.9" stroke-opacity="0.85"/><rect x="666.0" y="471.3" width="6" height="7.5" fill="#b0a845" stroke="#fff" stroke-width="0.9" stroke-opacity="0.85"/><rect x="672.4" y="469.3" width="6" height="7.5" fill="#b0a845" stroke="#fff" stroke-width="0.9" stroke-opacity="0.85"/><rect x="677.6" y="474.2" width="6" height="7.5" fill="#b0a845" stroke="#fff" stroke-width="0.9" stroke-opacity="0.85"/><rect x="682.8" y="471.3" width="6" height="7.5" fill="#b0a845" stroke="#fff" stroke-width="0.9" stroke-opacity="0.85"/><rect x="688.6" y="471.3" width="6" height="7.5" fill="#b0a845" stroke="#fff" stroke-width="0.9" stroke-opacity="0.85"/><rect x="693.5" y="471.3" width="6" height="7.5" fill="#b0a845" stroke="#fff" stroke-width="0.9" stroke-opacity="0.85"/><rect x="698.5" y="471.3" width="6" height="7.5" fill="#b0a845" stroke="#fff" stroke-width="0.9" stroke-opacity="0.85"/><rect x="701.4" y="465.5" width="6" height="7.5" fill="#b0a845" stroke="#fff" stroke-width="0.9" stroke-opacity="0.85"/><rect x="706.6" y="463.5" width="6" height="7.5" fill="#b0a845" stroke="#fff" stroke-width="0.9" stroke-opacity="0.85"/><rect x="711.8" y="463.5" width="6" height="7.5" fill="#b0a845" stroke="#fff" stroke-width="0.9" stroke-opacity="0.85"/><rect x="716.7" y="464.1" width="6" height="7.5" fill="#b0a845" stroke="#fff" stroke-width="0.9" stroke-opacity="0.85"/><rect x="721.1" y="470.8" width="6" height="7.5" fill="#b0a845" stroke="#fff" stroke-width="0.9" stroke-opacity="0.85"/><rect x="725.4" y="468.4" width="6" height="7.5" fill="#b0a845" stroke="#fff" stroke-width="0.9" stroke-opacity="0.85"/><rect x="730.4" y="463.5" width="6" height="7.5" fill="#b0a845" stroke="#fff" stroke-width="0.9" stroke-opacity="0.85"/><rect x="735.6" y="466.1" width="6" height="7.5" fill="#b0a845" stroke="#fff" stroke-width="0.9" stroke-opacity="0.85"/><rect x="739.9" y="469.3" width="6" height="7.5" fill="#b0a845" stroke="#fff" stroke-width="0.9" stroke-opacity="0.85"/><rect x="744.9" y="469.3" width="6" height="7.5" fill="#b0a845" stroke="#fff" stroke-width="0.9" stroke-opacity="0.85"/><rect x="750.1" y="473.7" width="6" height="7.5" fill="#b0a845" stroke="#fff" stroke-width="0.9" stroke-opacity="0.85"/><rect x="754.4" y="476.3" width="6" height="7.5" fill="#b0a845" stroke="#fff" stroke-width="0.9" stroke-opacity="0.85"/><rect x="758.8" y="476.3" width="6" height="7.5" fill="#b0a845" stroke="#fff" stroke-width="0.9" stroke-opacity="0.85"/><rect x="763.1" y="476.3" width="6" height="7.5" fill="#b0a845" stroke="#fff" stroke-width="0.9" stroke-opacity="0.85"/><rect x="768.9" y="474.2" width="6" height="7.5" fill="#b0a845" stroke="#fff" stroke-width="0.9" stroke-opacity="0.85"/><rect x="773.3" y="470.8" width="6" height="7.5" fill="#b0a845" stroke="#fff" stroke-width="0.9" stroke-opacity="0.85"/><rect x="778.2" y="471.9" width="6" height="7.5" fill="#b0a845" stroke="#fff" stroke-width="0.9" stroke-opacity="0.85"/><rect x="783.4" y="471.9" width="6" height="7.5" fill="#b0a845" stroke="#fff" stroke-width="0.9" stroke-opacity="0.85"/><rect x="787.8" y="469.9" width="6" height="7.5" fill="#b0a845" stroke="#fff" stroke-width="0.9" stroke-opacity="0.85"/><rect x="792.7" y="475.7" width="6" height="7.5" fill="#b0a845" stroke="#fff" stroke-width="0.9" stroke-opacity="0.85"/><rect x="797.9" y="472.8" width="6" height="7.5" fill="#b0a845" stroke="#fff" stroke-width="0.9" stroke-opacity="0.85"/><rect x="802.3" y="474.2" width="6" height="7.5" fill="#b0a845" stroke="#fff" stroke-width="0.9" stroke-opacity="0.85"/><rect x="807.2" y="476.3" width="6" height="7.5" fill="#b0a845" stroke="#fff" stroke-width="0.9" stroke-opacity="0.85"/><rect x="812.4" y="477.1" width="6" height="7.5" fill="#b0a845" stroke="#fff" stroke-width="0.9" stroke-opacity="0.85"/><rect x="816.8" y="470.8" width="6" height="7.5" fill="#b0a845" stroke="#fff" stroke-width="0.9" stroke-opacity="0.85"/><rect x="821.7" y="469.9" width="6" height="7.5" fill="#b0a845" stroke="#fff" stroke-width="0.9" stroke-opacity="0.85"/><rect x="826.9" y="470.5" width="6" height="7.5" fill="#b0a845" stroke="#fff" stroke-width="0.9" stroke-opacity="0.85"/><rect x="831.8" y="470.5" width="6" height="7.5" fill="#b0a845" stroke="#fff" stroke-width="0.9" stroke-opacity="0.85"/><rect x="837.1" y="476.3" width="6" height="7.5" fill="#b0a845" stroke="#fff" stroke-width="0.9" stroke-opacity="0.85"/><rect x="841.4" y="472.8" width="6" height="7.5" fill="#b0a845" stroke="#fff" stroke-width="0.9" stroke-opacity="0.85"/><rect x="845.8" y="469.3" width="6" height="7.5" fill="#b0a845" stroke="#fff" stroke-width="0.9" stroke-opacity="0.85"/><rect x="850.7" y="469.3" width="6" height="7.5" fill="#b0a845" stroke="#fff" stroke-width="0.9" stroke-opacity="0.85"/><rect x="855.9" y="469.3" width="6" height="7.5" fill="#b0a845" stroke="#fff" stroke-width="0.9" stroke-opacity="0.85"/><rect x="860.8" y="469.3" width="6" height="7.5" fill="#b0a845" stroke="#fff" stroke-width="0.9" stroke-opacity="0.85"/><rect x="866.1" y="472.8" width="6" height="7.5" fill="#b0a845" stroke="#fff" stroke-width="0.9" stroke-opacity="0.85"/><rect x="870.4" y="477.1" width="6" height="7.5" fill="#b0a845" stroke="#fff" stroke-width="0.9" stroke-opacity="0.85"/><rect x="875.3" y="477.1" width="6" height="7.5" fill="#b0a845" stroke="#fff" stroke-width="0.9" stroke-opacity="0.85"/><rect x="880.5" y="477.1" width="6" height="7.5" fill="#b0a845" stroke="#fff" stroke-width="0.9" stroke-opacity="0.85"/><rect x="884.9" y="473.7" width="6" height="7.5" fill="#b0a845" stroke="#fff" stroke-width="0.9" stroke-opacity="0.85"/><rect x="889.8" y="470.5" width="6" height="7.5" fill="#b0a845" stroke="#fff" stroke-width="0.9" stroke-opacity="0.85"/><rect x="895.0" y="471.3" width="6" height="7.5" fill="#b0a845" stroke="#fff" stroke-width="0.9" stroke-opacity="0.85"/><rect x="899.4" y="471.3" width="6" height="7.5" fill="#b0a845" stroke="#fff" stroke-width="0.9" stroke-opacity="0.85"/><rect x="904.3" y="469.0" width="6" height="7.5" fill="#b0a845" stroke="#fff" stroke-width="0.9" stroke-opacity="0.85"/><rect x="908.7" y="474.2" width="6" height="7.5" fill="#b0a845" stroke="#fff" stroke-width="0.9" stroke-opacity="0.85"/><rect x="913.9" y="471.9" width="6" height="7.5" fill="#b0a845" stroke="#fff" stroke-width="0.9" stroke-opacity="0.85"/><rect x="918.8" y="476.3" width="6" height="7.5" fill="#b0a845" stroke="#fff" stroke-width="0.9" stroke-opacity="0.85"/><rect x="924.0" y="476.3" width="6" height="7.5" fill="#b0a845" stroke="#fff" stroke-width="0.9" stroke-opacity="0.85"/><rect x="928.4" y="476.3" width="6" height="7.5" fill="#b0a845" stroke="#fff" stroke-width="0.9" stroke-opacity="0.85"/><rect x="932.7" y="470.5" width="6" height="7.5" fill="#b0a845" stroke="#fff" stroke-width="0.9" stroke-opacity="0.85"/><rect x="937.7" y="468.4" width="6" height="7.5" fill="#b0a845" stroke="#fff" stroke-width="0.9" stroke-opacity="0.85"/><rect x="942.9" y="468.4" width="6" height="7.5" fill="#b0a845" stroke="#fff" stroke-width="0.9" stroke-opacity="0.85"/><rect x="947.8" y="468.4" width="6" height="7.5" fill="#b0a845" stroke="#fff" stroke-width="0.9" stroke-opacity="0.85"/><rect x="952.2" y="476.3" width="6" height="7.5" fill="#b0a845" stroke="#fff" stroke-width="0.9" stroke-opacity="0.85"/><rect x="957.4" y="473.4" width="6" height="7.5" fill="#b0a845" stroke="#fff" stroke-width="0.9" stroke-opacity="0.85"/><rect x="961.7" y="469.9" width="6" height="7.5" fill="#b0a845" stroke="#fff" stroke-width="0.9" stroke-opacity="0.85"/><rect x="966.7" y="467.9" width="6" height="7.5" fill="#b0a845" stroke="#fff" stroke-width="0.9" stroke-opacity="0.85"/><rect x="304.9" y="640.9" width="3.2" height="12.6" fill="url(#og)" opacity="0.8"/><rect x="309.7" y="639.5" width="3.2" height="12.3" fill="url(#og)" opacity="0.8"/><rect x="314.5" y="642.4" width="3.2" height="11.6" fill="url(#og)" opacity="0.8"/><rect x="319.3" y="643.3" width="3.2" height="12.3" fill="url(#og)" opacity="0.8"/><rect x="324.1" y="643.6" width="3.2" height="11.8" fill="url(#og)" opacity="0.8"/><rect x="547.3" y="642.8" width="3.2" height="12.2" fill="url(#og)" opacity="0.8"/><rect x="552.3" y="642.7" width="3.2" height="12.2" fill="url(#og)" opacity="0.8"/><rect x="557.3" y="637.9" width="3.2" height="9.8" fill="url(#og)" opacity="0.8"/><rect x="563.3" y="637.9" width="3.2" height="11.6" fill="url(#og)" opacity="0.8"/><rect x="568.2" y="632.5" width="3.2" height="11.1" fill="url(#og)" opacity="0.8"/><rect x="573.2" y="636.4" width="3.2" height="11.1" fill="url(#og)" opacity="0.8"/><rect x="578.2" y="639.8" width="3.2" height="11.0" fill="url(#og)" opacity="0.8"/><rect x="582.1" y="644.2" width="3.2" height="9.8" fill="url(#og)" opacity="0.8"/><rect x="587.1" y="645.5" width="3.2" height="10.6" fill="url(#og)" opacity="0.8"/><rect x="592.1" y="645.8" width="3.2" height="10.0" fill="url(#og)" opacity="0.8"/><rect x="597.1" y="645.2" width="3.2" height="11.2" fill="url(#og)" opacity="0.8"/><rect x="602.0" y="643.4" width="3.2" height="11.9" fill="url(#og)" opacity="0.8"/><rect x="606.0" y="642.9" width="3.2" height="11.4" fill="url(#og)" opacity="0.8"/><rect x="610.0" y="645.9" width="3.2" height="10.1" fill="url(#og)" opacity="0.8"/><rect x="615.0" y="645.6" width="3.2" height="10.8" fill="url(#og)" opacity="0.8"/><rect x="619.9" y="646.0" width="3.2" height="11.0" fill="url(#og)" opacity="0.8"/><rect x="624.9" y="645.4" width="3.2" height="10.5" fill="url(#og)" opacity="0.8"/><rect x="629.9" y="644.8" width="3.2" height="11.2" fill="url(#og)" opacity="0.8"/><rect x="635.8" y="642.2" width="3.2" height="11.4" fill="url(#og)" opacity="0.8"/><rect x="640.8" y="642.1" width="3.2" height="12.4" fill="url(#og)" opacity="0.8"/><rect x="645.8" y="630.0" width="3.2" height="12.2" fill="url(#og)" opacity="0.8"/><rect x="649.8" y="637.9" width="3.2" height="12.5" fill="url(#og)" opacity="0.8"/><rect x="653.7" y="637.0" width="3.2" height="10.6" fill="url(#og)" opacity="0.8"/><rect x="658.7" y="636.1" width="3.2" height="11.8" fill="url(#og)" opacity="0.8"/><rect x="663.7" y="636.6" width="3.2" height="13.3" fill="url(#og)" opacity="0.8"/><rect x="668.6" y="637.4" width="3.2" height="11.5" fill="url(#og)" opacity="0.8"/><rect x="674.6" y="631.8" width="3.2" height="11.7" fill="url(#og)" opacity="0.8"/><rect x="679.6" y="642.7" width="3.2" height="10.6" fill="url(#og)" opacity="0.8"/><rect x="685.5" y="636.0" width="3.2" height="11.2" fill="url(#og)" opacity="0.8"/><rect x="690.5" y="637.4" width="3.2" height="12.4" fill="url(#og)" opacity="0.8"/><rect x="696.5" y="638.0" width="3.2" height="11.1" fill="url(#og)" opacity="0.8"/><rect x="701.5" y="641.0" width="3.2" height="10.5" fill="url(#og)" opacity="0.8"/><rect x="706.4" y="639.1" width="3.2" height="12.5" fill="url(#og)" opacity="0.8"/><rect x="711.4" y="638.0" width="3.2" height="13.3" fill="url(#og)" opacity="0.8"/><rect x="716.4" y="638.1" width="3.2" height="11.4" fill="url(#og)" opacity="0.8"/><rect x="721.3" y="636.5" width="3.2" height="12.7" fill="url(#og)" opacity="0.8"/><rect x="726.3" y="639.3" width="3.2" height="11.0" fill="url(#og)" opacity="0.8"/><rect x="731.3" y="637.5" width="3.2" height="12.7" fill="url(#og)" opacity="0.8"/><rect x="736.3" y="640.2" width="3.2" height="10.9" fill="url(#og)" opacity="0.8"/><rect x="741.2" y="644.6" width="3.2" height="10.7" fill="url(#og)" opacity="0.8"/><rect x="746.2" y="643.8" width="3.2" height="11.0" fill="url(#og)" opacity="0.8"/><rect x="751.2" y="639.6" width="3.2" height="12.7" fill="url(#og)" opacity="0.8"/><rect x="755.1" y="641.5" width="3.2" height="10.3" fill="url(#og)" opacity="0.8"/><rect x="759.4" y="641.7" width="3.2" height="11.6" fill="url(#og)" opacity="0.8"/><rect x="764.4" y="640.4" width="3.2" height="11.8" fill="url(#og)" opacity="0.8"/><rect x="769.3" y="640.3" width="3.2" height="10.4" fill="url(#og)" opacity="0.8"/><rect x="774.3" y="633.9" width="3.2" height="12.4" fill="url(#og)" opacity="0.8"/><rect x="779.3" y="636.5" width="3.2" height="11.7" fill="url(#og)" opacity="0.8"/><rect x="784.3" y="636.8" width="3.2" height="12.0" fill="url(#og)" opacity="0.8"/><rect x="789.2" y="632.1" width="3.2" height="11.5" fill="url(#og)" opacity="0.8"/><rect x="794.2" y="642.0" width="3.2" height="11.9" fill="url(#og)" opacity="0.8"/><rect x="799.2" y="635.6" width="3.2" height="11.3" fill="url(#og)" opacity="0.8"/><rect x="803.7" y="640.2" width="3.2" height="11.0" fill="url(#og)" opacity="0.8"/><rect x="808.1" y="641.8" width="3.2" height="11.2" fill="url(#og)" opacity="0.8"/><rect x="813.1" y="642.5" width="3.2" height="12.2" fill="url(#og)" opacity="0.8"/><rect x="817.1" y="646.8" width="3.2" height="10.0" fill="url(#og)" opacity="0.8"/><rect x="822.0" y="645.8" width="3.2" height="12.0" fill="url(#og)" opacity="0.8"/><rect x="827.0" y="644.7" width="3.2" height="12.5" fill="url(#og)" opacity="0.8"/><rect x="832.0" y="645.9" width="3.2" height="10.7" fill="url(#og)" opacity="0.8"/><rect x="836.9" y="643.9" width="3.2" height="11.4" fill="url(#og)" opacity="0.8"/><rect x="840.9" y="643.8" width="3.2" height="12.2" fill="url(#og)" opacity="0.8"/><rect x="845.9" y="644.3" width="3.2" height="12.1" fill="url(#og)" opacity="0.8"/><rect x="850.9" y="644.6" width="3.2" height="11.1" fill="url(#og)" opacity="0.8"/><rect x="855.8" y="642.8" width="3.2" height="11.9" fill="url(#og)" opacity="0.8"/><rect x="861.8" y="644.8" width="3.2" height="11.5" fill="url(#og)" opacity="0.8"/><rect x="865.8" y="641.8" width="3.2" height="10.9" fill="url(#og)" opacity="0.8"/><rect x="870.7" y="640.6" width="3.2" height="11.9" fill="url(#og)" opacity="0.8"/><rect x="875.7" y="641.6" width="3.2" height="11.4" fill="url(#og)" opacity="0.8"/><rect x="880.7" y="640.7" width="3.2" height="12.0" fill="url(#og)" opacity="0.8"/><rect x="885.7" y="638.8" width="3.2" height="11.5" fill="url(#og)" opacity="0.8"/><rect x="889.6" y="635.1" width="3.2" height="11.2" fill="url(#og)" opacity="0.8"/><rect x="894.6" y="637.2" width="3.2" height="10.8" fill="url(#og)" opacity="0.8"/><rect x="899.6" y="635.9" width="3.2" height="11.6" fill="url(#og)" opacity="0.8"/><rect x="905.1" y="632.4" width="3.2" height="11.3" fill="url(#og)" opacity="0.8"/><rect x="909.9" y="639.0" width="3.2" height="12.5" fill="url(#og)" opacity="0.8"/><rect x="915.5" y="636.3" width="3.2" height="10.6" fill="url(#og)" opacity="0.8"/><rect x="918.5" y="641.5" width="3.2" height="13.4" fill="url(#og)" opacity="0.8"/><rect x="923.4" y="642.2" width="3.2" height="11.3" fill="url(#og)" opacity="0.8"/><rect x="928.4" y="641.8" width="3.2" height="11.9" fill="url(#og)" opacity="0.8"/><rect x="933.4" y="644.7" width="3.2" height="12.5" fill="url(#og)" opacity="0.8"/><rect x="938.4" y="644.5" width="3.2" height="11.5" fill="url(#og)" opacity="0.8"/><rect x="942.3" y="645.6" width="3.2" height="11.6" fill="url(#og)" opacity="0.8"/><rect x="947.3" y="644.6" width="3.2" height="10.8" fill="url(#og)" opacity="0.8"/><rect x="952.3" y="643.3" width="3.2" height="10.8" fill="url(#og)" opacity="0.8"/><rect x="957.2" y="644.0" width="3.2" height="11.1" fill="url(#og)" opacity="0.8"/><rect x="962.2" y="646.1" width="3.2" height="10.3" fill="url(#og)" opacity="0.8"/><rect x="968.2" y="645.7" width="3.2" height="9.8" fill="url(#og)" opacity="0.8"/><rect x="568.2" y="609.9" width="3.2" height="27.8" fill="url(#og)" opacity="0.85"/><rect x="602.0" y="638.3" width="3.2" height="11.3" fill="url(#og)" opacity="0.85"/><rect x="635.8" y="631.8" width="3.2" height="16.5" fill="url(#og)" opacity="0.85"/><rect x="645.8" y="604.9" width="3.2" height="31.8" fill="url(#og)" opacity="0.85"/><rect x="655.7" y="634.8" width="3.2" height="8.0" fill="url(#og)" opacity="0.85"/><rect x="660.1" y="632.8" width="3.2" height="9.5" fill="url(#og)" opacity="0.85"/><rect x="674.6" y="601.0" width="3.2" height="37.8" fill="url(#og)" opacity="0.85"/><rect x="684.6" y="612.5" width="3.2" height="29.8" fill="url(#og)" opacity="0.85"/><rect x="718.4" y="634.8" width="3.2" height="9.5" fill="url(#og)" opacity="0.85"/><rect x="751.2" y="628.8" width="3.2" height="17.5" fill="url(#og)" opacity="0.85"/><rect x="790.2" y="616.9" width="3.2" height="21.9" fill="url(#og)" opacity="0.85"/><rect x="799.2" y="606.9" width="3.2" height="34.8" fill="url(#og)" opacity="0.85"/><rect x="833.0" y="638.7" width="3.2" height="11.9" fill="url(#og)" opacity="0.85"/><rect x="866.8" y="622.8" width="3.2" height="23.9" fill="url(#og)" opacity="0.85"/><rect x="885.7" y="631.8" width="3.2" height="12.9" fill="url(#og)" opacity="0.85"/><rect x="891.2" y="630.8" width="3.2" height="10.3" fill="url(#og)" opacity="0.85"/><rect x="905.1" y="612.9" width="3.2" height="24.9" fill="url(#og)" opacity="0.85"/><rect x="915.5" y="610.9" width="3.2" height="30.2" fill="url(#og)" opacity="0.85"/><rect x="949.3" y="637.8" width="3.2" height="11.9" fill="url(#og)" opacity="0.85"/><rect x="314.4" y="626.0" width="3.2" height="23.0" fill="url(#og)" opacity="0.85"/><rect x="303.5" y="643.8" width="6" height="8.5" fill="#c9ae3e" stroke="#fff" stroke-width="0.9" stroke-opacity="0.85"/><rect x="308.3" y="641.8" width="6" height="8.5" fill="#c9ae3e" stroke="#fff" stroke-width="0.9" stroke-opacity="0.85"/><rect x="313.1" y="644.8" width="6" height="8.5" fill="#c9ae3e" stroke="#fff" stroke-width="0.9" stroke-opacity="0.85"/><rect x="317.9" y="645.8" width="6" height="8.5" fill="#c9ae3e" stroke="#fff" stroke-width="0.9" stroke-opacity="0.85"/><rect x="322.7" y="645.8" width="6" height="8.5" fill="#c9ae3e" stroke="#fff" stroke-width="0.9" stroke-opacity="0.85"/><rect x="545.9" y="644.8" width="6" height="8.5" fill="#c9ae3e" stroke="#fff" stroke-width="0.9" stroke-opacity="0.85"/><rect x="550.9" y="644.8" width="6" height="8.5" fill="#c9ae3e" stroke="#fff" stroke-width="0.9" stroke-opacity="0.85"/><rect x="555.9" y="638.5" width="6" height="8.5" fill="#c9ae3e" stroke="#fff" stroke-width="0.9" stroke-opacity="0.85"/><rect x="561.9" y="639.5" width="6" height="8.5" fill="#c9ae3e" stroke="#fff" stroke-width="0.9" stroke-opacity="0.85"/><rect x="566.8" y="633.5" width="6" height="8.5" fill="#c9ae3e" stroke="#fff" stroke-width="0.9" stroke-opacity="0.85"/><rect x="571.8" y="638.5" width="6" height="8.5" fill="#c9ae3e" stroke="#fff" stroke-width="0.9" stroke-opacity="0.85"/><rect x="576.8" y="641.5" width="6" height="8.5" fill="#c9ae3e" stroke="#fff" stroke-width="0.9" stroke-opacity="0.85"/><rect x="580.7" y="644.8" width="6" height="8.5" fill="#c9ae3e" stroke="#fff" stroke-width="0.9" stroke-opacity="0.85"/><rect x="585.7" y="646.8" width="6" height="8.5" fill="#c9ae3e" stroke="#fff" stroke-width="0.9" stroke-opacity="0.85"/><rect x="590.7" y="646.8" width="6" height="8.5" fill="#c9ae3e" stroke="#fff" stroke-width="0.9" stroke-opacity="0.85"/><rect x="595.7" y="646.8" width="6" height="8.5" fill="#c9ae3e" stroke="#fff" stroke-width="0.9" stroke-opacity="0.85"/><rect x="600.6" y="645.4" width="6" height="8.5" fill="#c9ae3e" stroke="#fff" stroke-width="0.9" stroke-opacity="0.85"/><rect x="604.6" y="644.0" width="6" height="8.5" fill="#c9ae3e" stroke="#fff" stroke-width="0.9" stroke-opacity="0.85"/><rect x="608.6" y="646.4" width="6" height="8.5" fill="#c9ae3e" stroke="#fff" stroke-width="0.9" stroke-opacity="0.85"/><rect x="613.6" y="646.8" width="6" height="8.5" fill="#c9ae3e" stroke="#fff" stroke-width="0.9" stroke-opacity="0.85"/><rect x="618.5" y="646.8" width="6" height="8.5" fill="#c9ae3e" stroke="#fff" stroke-width="0.9" stroke-opacity="0.85"/><rect x="623.5" y="646.8" width="6" height="8.5" fill="#c9ae3e" stroke="#fff" stroke-width="0.9" stroke-opacity="0.85"/><rect x="628.5" y="646.8" width="6" height="8.5" fill="#c9ae3e" stroke="#fff" stroke-width="0.9" stroke-opacity="0.85"/><rect x="634.4" y="644.0" width="6" height="8.5" fill="#c9ae3e" stroke="#fff" stroke-width="0.9" stroke-opacity="0.85"/><rect x="639.4" y="644.0" width="6" height="8.5" fill="#c9ae3e" stroke="#fff" stroke-width="0.9" stroke-opacity="0.85"/><rect x="644.4" y="632.5" width="6" height="8.5" fill="#c9ae3e" stroke="#fff" stroke-width="0.9" stroke-opacity="0.85"/><rect x="648.4" y="640.5" width="6" height="8.5" fill="#c9ae3e" stroke="#fff" stroke-width="0.9" stroke-opacity="0.85"/><rect x="652.3" y="638.5" width="6" height="8.5" fill="#c9ae3e" stroke="#fff" stroke-width="0.9" stroke-opacity="0.85"/><rect x="657.3" y="638.1" width="6" height="8.5" fill="#c9ae3e" stroke="#fff" stroke-width="0.9" stroke-opacity="0.85"/><rect x="662.3" y="639.5" width="6" height="8.5" fill="#c9ae3e" stroke="#fff" stroke-width="0.9" stroke-opacity="0.85"/><rect x="667.2" y="639.5" width="6" height="8.5" fill="#c9ae3e" stroke="#fff" stroke-width="0.9" stroke-opacity="0.85"/><rect x="673.2" y="634.5" width="6" height="8.5" fill="#c9ae3e" stroke="#fff" stroke-width="0.9" stroke-opacity="0.85"/><rect x="678.2" y="643.4" width="6" height="8.5" fill="#c9ae3e" stroke="#fff" stroke-width="0.9" stroke-opacity="0.85"/><rect x="684.1" y="638.1" width="6" height="8.5" fill="#c9ae3e" stroke="#fff" stroke-width="0.9" stroke-opacity="0.85"/><rect x="689.1" y="639.5" width="6" height="8.5" fill="#c9ae3e" stroke="#fff" stroke-width="0.9" stroke-opacity="0.85"/><rect x="695.1" y="639.5" width="6" height="8.5" fill="#c9ae3e" stroke="#fff" stroke-width="0.9" stroke-opacity="0.85"/><rect x="700.1" y="642.1" width="6" height="8.5" fill="#c9ae3e" stroke="#fff" stroke-width="0.9" stroke-opacity="0.85"/><rect x="705.0" y="642.1" width="6" height="8.5" fill="#c9ae3e" stroke="#fff" stroke-width="0.9" stroke-opacity="0.85"/><rect x="710.0" y="640.9" width="6" height="8.5" fill="#c9ae3e" stroke="#fff" stroke-width="0.9" stroke-opacity="0.85"/><rect x="715.0" y="640.1" width="6" height="8.5" fill="#c9ae3e" stroke="#fff" stroke-width="0.9" stroke-opacity="0.85"/><rect x="719.9" y="639.5" width="6" height="8.5" fill="#c9ae3e" stroke="#fff" stroke-width="0.9" stroke-opacity="0.85"/><rect x="724.9" y="640.9" width="6" height="8.5" fill="#c9ae3e" stroke="#fff" stroke-width="0.9" stroke-opacity="0.85"/><rect x="729.9" y="640.5" width="6" height="8.5" fill="#c9ae3e" stroke="#fff" stroke-width="0.9" stroke-opacity="0.85"/><rect x="734.9" y="641.5" width="6" height="8.5" fill="#c9ae3e" stroke="#fff" stroke-width="0.9" stroke-opacity="0.85"/><rect x="739.8" y="645.4" width="6" height="8.5" fill="#c9ae3e" stroke="#fff" stroke-width="0.9" stroke-opacity="0.85"/><rect x="744.8" y="645.4" width="6" height="8.5" fill="#c9ae3e" stroke="#fff" stroke-width="0.9" stroke-opacity="0.85"/><rect x="749.8" y="642.1" width="6" height="8.5" fill="#c9ae3e" stroke="#fff" stroke-width="0.9" stroke-opacity="0.85"/><rect x="753.7" y="642.1" width="6" height="8.5" fill="#c9ae3e" stroke="#fff" stroke-width="0.9" stroke-opacity="0.85"/><rect x="758.0" y="642.8" width="6" height="8.5" fill="#c9ae3e" stroke="#fff" stroke-width="0.9" stroke-opacity="0.85"/><rect x="763.0" y="642.8" width="6" height="8.5" fill="#c9ae3e" stroke="#fff" stroke-width="0.9" stroke-opacity="0.85"/><rect x="767.9" y="641.5" width="6" height="8.5" fill="#c9ae3e" stroke="#fff" stroke-width="0.9" stroke-opacity="0.85"/><rect x="772.9" y="636.9" width="6" height="8.5" fill="#c9ae3e" stroke="#fff" stroke-width="0.9" stroke-opacity="0.85"/><rect x="777.9" y="638.5" width="6" height="8.5" fill="#c9ae3e" stroke="#fff" stroke-width="0.9" stroke-opacity="0.85"/><rect x="782.9" y="638.9" width="6" height="8.5" fill="#c9ae3e" stroke="#fff" stroke-width="0.9" stroke-opacity="0.85"/><rect x="787.8" y="634.5" width="6" height="8.5" fill="#c9ae3e" stroke="#fff" stroke-width="0.9" stroke-opacity="0.85"/><rect x="792.8" y="644.4" width="6" height="8.5" fill="#c9ae3e" stroke="#fff" stroke-width="0.9" stroke-opacity="0.85"/><rect x="797.8" y="637.5" width="6" height="8.5" fill="#c9ae3e" stroke="#fff" stroke-width="0.9" stroke-opacity="0.85"/><rect x="802.3" y="641.5" width="6" height="8.5" fill="#c9ae3e" stroke="#fff" stroke-width="0.9" stroke-opacity="0.85"/><rect x="806.7" y="643.4" width="6" height="8.5" fill="#c9ae3e" stroke="#fff" stroke-width="0.9" stroke-opacity="0.85"/><rect x="811.7" y="644.8" width="6" height="8.5" fill="#c9ae3e" stroke="#fff" stroke-width="0.9" stroke-opacity="0.85"/><rect x="815.7" y="647.4" width="6" height="8.5" fill="#c9ae3e" stroke="#fff" stroke-width="0.9" stroke-opacity="0.85"/><rect x="820.6" y="647.4" width="6" height="8.5" fill="#c9ae3e" stroke="#fff" stroke-width="0.9" stroke-opacity="0.85"/><rect x="825.6" y="647.4" width="6" height="8.5" fill="#c9ae3e" stroke="#fff" stroke-width="0.9" stroke-opacity="0.85"/><rect x="830.6" y="646.4" width="6" height="8.5" fill="#c9ae3e" stroke="#fff" stroke-width="0.9" stroke-opacity="0.85"/><rect x="835.5" y="645.4" width="6" height="8.5" fill="#c9ae3e" stroke="#fff" stroke-width="0.9" stroke-opacity="0.85"/><rect x="839.5" y="646.0" width="6" height="8.5" fill="#c9ae3e" stroke="#fff" stroke-width="0.9" stroke-opacity="0.85"/><rect x="844.5" y="646.0" width="6" height="8.5" fill="#c9ae3e" stroke="#fff" stroke-width="0.9" stroke-opacity="0.85"/><rect x="849.5" y="646.0" width="6" height="8.5" fill="#c9ae3e" stroke="#fff" stroke-width="0.9" stroke-opacity="0.85"/><rect x="854.4" y="645.4" width="6" height="8.5" fill="#c9ae3e" stroke="#fff" stroke-width="0.9" stroke-opacity="0.85"/><rect x="860.4" y="646.0" width="6" height="8.5" fill="#c9ae3e" stroke="#fff" stroke-width="0.9" stroke-opacity="0.85"/><rect x="864.4" y="642.5" width="6" height="8.5" fill="#c9ae3e" stroke="#fff" stroke-width="0.9" stroke-opacity="0.85"/><rect x="869.3" y="642.8" width="6" height="8.5" fill="#c9ae3e" stroke="#fff" stroke-width="0.9" stroke-opacity="0.85"/><rect x="874.3" y="642.8" width="6" height="8.5" fill="#c9ae3e" stroke="#fff" stroke-width="0.9" stroke-opacity="0.85"/><rect x="879.3" y="643.4" width="6" height="8.5" fill="#c9ae3e" stroke="#fff" stroke-width="0.9" stroke-opacity="0.85"/><rect x="884.3" y="640.5" width="6" height="8.5" fill="#c9ae3e" stroke="#fff" stroke-width="0.9" stroke-opacity="0.85"/><rect x="888.2" y="636.9" width="6" height="8.5" fill="#c9ae3e" stroke="#fff" stroke-width="0.9" stroke-opacity="0.85"/><rect x="893.2" y="638.1" width="6" height="8.5" fill="#c9ae3e" stroke="#fff" stroke-width="0.9" stroke-opacity="0.85"/><rect x="898.2" y="638.5" width="6" height="8.5" fill="#c9ae3e" stroke="#fff" stroke-width="0.9" stroke-opacity="0.85"/><rect x="903.7" y="633.5" width="6" height="8.5" fill="#c9ae3e" stroke="#fff" stroke-width="0.9" stroke-opacity="0.85"/><rect x="908.5" y="641.5" width="6" height="8.5" fill="#c9ae3e" stroke="#fff" stroke-width="0.9" stroke-opacity="0.85"/><rect x="914.1" y="636.9" width="6" height="8.5" fill="#c9ae3e" stroke="#fff" stroke-width="0.9" stroke-opacity="0.85"/><rect x="917.1" y="644.4" width="6" height="8.5" fill="#c9ae3e" stroke="#fff" stroke-width="0.9" stroke-opacity="0.85"/><rect x="922.0" y="644.4" width="6" height="8.5" fill="#c9ae3e" stroke="#fff" stroke-width="0.9" stroke-opacity="0.85"/><rect x="927.0" y="644.4" width="6" height="8.5" fill="#c9ae3e" stroke="#fff" stroke-width="0.9" stroke-opacity="0.85"/><rect x="932.0" y="646.8" width="6" height="8.5" fill="#c9ae3e" stroke="#fff" stroke-width="0.9" stroke-opacity="0.85"/><rect x="937.0" y="646.8" width="6" height="8.5" fill="#c9ae3e" stroke="#fff" stroke-width="0.9" stroke-opacity="0.85"/><rect x="940.9" y="646.8" width="6" height="8.5" fill="#c9ae3e" stroke="#fff" stroke-width="0.9" stroke-opacity="0.85"/><rect x="945.9" y="645.4" width="6" height="8.5" fill="#c9ae3e" stroke="#fff" stroke-width="0.9" stroke-opacity="0.85"/><rect x="950.9" y="644.8" width="6" height="8.5" fill="#c9ae3e" stroke="#fff" stroke-width="0.9" stroke-opacity="0.85"/><rect x="955.8" y="646.0" width="6" height="8.5" fill="#c9ae3e" stroke="#fff" stroke-width="0.9" stroke-opacity="0.85"/><rect x="960.8" y="646.8" width="6" height="8.5" fill="#c9ae3e" stroke="#fff" stroke-width="0.9" stroke-opacity="0.85"/><rect x="966.8" y="646.4" width="6" height="8.5" fill="#c9ae3e" stroke="#fff" stroke-width="0.9" stroke-opacity="0.85"/><rect x="555.5" y="604" width="4" height="36" fill="#c9e4f0"/><rect x="555.5" y="460.5" width="4" height="18" fill="#c9e4f0"/><circle cx="560" cy="478" r="10" fill="#f0eed8" opacity="0.6"/><rect x="554.5" y="472" width="6" height="11" fill="#8fd0d8" opacity="0.85"/><circle cx="560" cy="643" r="10" fill="#f0eed8" opacity="0.6"/><rect x="554.5" y="637" width="7" height="11" fill="#8fd0d8" opacity="0.85"/><rect x="308" y="751" width="664.7" height="3" fill="#98ab4c"/><rect x="327.5" y="747" width="4.8" height="11" fill="#f0a31c"/><rect x="337" y="747" width="4.8" height="11" fill="#f0a31c"/><rect x="443" y="747" width="4.8" height="11" fill="#98ab4c"/><rect x="452" y="747" width="4.8" height="11" fill="#f0a31c"/><rect x="558" y="747" width="4.8" height="11" fill="#e8652d"/><rect x="568.4" y="747" width="4.8" height="11" fill="#f0a31c"/><rect x="645" y="747" width="4.8" height="11" fill="#f0a31c"/><rect x="673.8" y="747" width="4.8" height="11" fill="#f0a31c"/><rect x="684.4" y="747" width="4.8" height="11" fill="#98ab4c"/><rect x="790" y="747" width="4.8" height="11" fill="#98ab4c"/><rect x="799" y="747" width="4.8" height="11" fill="#98ab4c"/><rect x="915" y="747" width="4.8" height="11" fill="#98ab4c"/><rect x="308" y="578.5" width="808" height="2.4" fill="#8a72c9"/><polygon points="1137,428.9 1157,418.8 1176.6,428.9" fill="#b9a9e2"/><text x="1157.5" y="447" font-family="'Liberation Sans', sans-serif" font-size="11.5" fill="#a898d8" text-anchor="middle" font-weight="400" >80%</text><text x="1157.5" y="583" font-family="'Liberation Sans', sans-serif" font-size="11.5" fill="#a898d8" text-anchor="middle" font-weight="400" >80%</text><rect x="327.8" y="446.3" width="217.6" height="218.8" rx="3" fill="#f7f7f7" stroke="#6fc8e0" stroke-width="1.3"/><text x="340.5" y="469.4" font-family="'Liberation Sans', sans-serif" font-size="10.3" fill="#222" text-anchor="start" font-weight="700" textLength="120.7" lengthAdjust="spacingAndGlyphs" >Tue 23-Aug-2022 04:00</text><rect x="334" y="479" width="204" height="1.2" fill="#c2c2c2"/><defs><linearGradient id="dg1" x1="0" x2="0" y1="0" y2="1"><stop offset="0" stop-color="#9aab45"/><stop offset="0.5" stop-color="#f0a21e"/><stop offset="1" stop-color="#e46a48"/></linearGradient><linearGradient id="dg2" x1="0" x2="0" y1="0" y2="1"><stop offset="0" stop-color="#cfd6a4"/><stop offset="0.5" stop-color="#f2d49a"/><stop offset="1" stop-color="#f1b3a0"/></linearGradient></defs><circle cx="337.5" cy="493.7" r="3.6" fill="url(#dg1)"/><text x="344.3" y="497.7" font-family="'Liberation Sans', sans-serif" font-size="12" fill="#333" text-anchor="start" font-weight="400" textLength="41" lengthAdjust="spacingAndGlyphs" >Avg IN:</text><text x="416.4" y="497.7" font-family="'Liberation Sans', sans-serif" font-size="12" fill="#333" text-anchor="start" font-weight="400" textLength="64.6" lengthAdjust="spacingAndGlyphs" >14.23 kbps</text><rect x="487" y="487.7" width="1" height="12" fill="#ccc"/><text x="503.8" y="497.7" font-family="'Liberation Sans', sans-serif" font-size="12" fill="#333" text-anchor="start" font-weight="400" textLength="34.2" lengthAdjust="spacingAndGlyphs" >22.3%</text><circle cx="337.5" cy="511.70000000000005" r="3.6" fill="url(#dg1)"/><text x="344.3" y="515.7" font-family="'Liberation Sans', sans-serif" font-size="12" fill="#333" text-anchor="start" font-weight="400" textLength="54.3" lengthAdjust="spacingAndGlyphs" >Avg OUT:</text><text x="416" y="515.7" font-family="'Liberation Sans', sans-serif" font-size="12" fill="#333" text-anchor="start" font-weight="400" textLength="65" lengthAdjust="spacingAndGlyphs" >20.53 kbps</text><rect x="487" y="505.70000000000005" width="1" height="12" fill="#ccc"/><text x="503.8" y="515.7" font-family="'Liberation Sans', sans-serif" font-size="12" fill="#333" text-anchor="start" font-weight="400" textLength="34.2" lengthAdjust="spacingAndGlyphs" >32.3%</text><circle cx="337.5" cy="529.7" r="3.6" fill="url(#dg2)"/><text x="344.3" y="533.7" font-family="'Liberation Sans', sans-serif" font-size="12" fill="#333" text-anchor="start" font-weight="400" textLength="40.4" lengthAdjust="spacingAndGlyphs" >Min IN:</text><text x="416.6" y="533.7" font-family="'Liberation Sans', sans-serif" font-size="12" fill="#333" text-anchor="start" font-weight="400" textLength="64.4" lengthAdjust="spacingAndGlyphs" >12.75 kbps</text><rect x="487" y="523.7" width="1" height="12" fill="#ccc"/><text x="515.7" y="533.7" font-family="'Liberation Sans', sans-serif" font-size="12" fill="#333" text-anchor="start" font-weight="400" textLength="22.3" lengthAdjust="spacingAndGlyphs" >20%</text><circle cx="337.5" cy="547.7" r="3.6" fill="url(#dg2)"/><text x="344.3" y="551.7" font-family="'Liberation Sans', sans-serif" font-size="12" fill="#333" text-anchor="start" font-weight="400" textLength="53.3" lengthAdjust="spacingAndGlyphs" >Min OUT:</text><text x="416.6" y="551.7" font-family="'Liberation Sans', sans-serif" font-size="12" fill="#333" text-anchor="start" font-weight="400" textLength="64.4" lengthAdjust="spacingAndGlyphs" >16.98 kbps</text><rect x="487" y="541.7" width="1" height="12" fill="#ccc"/><text x="503.8" y="551.7" font-family="'Liberation Sans', sans-serif" font-size="12" fill="#333" text-anchor="start" font-weight="400" textLength="34.2" lengthAdjust="spacingAndGlyphs" >26.7%</text><circle cx="337.5" cy="565.7" r="3.6" fill="url(#dg2)"/><text x="344.3" y="569.7" font-family="'Liberation Sans', sans-serif" font-size="12" fill="#333" text-anchor="start" font-weight="400" textLength="43.4" lengthAdjust="spacingAndGlyphs" >Max IN:</text><text x="416" y="569.7" font-family="'Liberation Sans', sans-serif" font-size="12" fill="#333" text-anchor="start" font-weight="400" textLength="65" lengthAdjust="spacingAndGlyphs" >19.39 kbps</text><rect x="487" y="559.7" width="1" height="12" fill="#ccc"/><text x="503.7" y="569.7" font-family="'Liberation Sans', sans-serif" font-size="12" fill="#333" text-anchor="start" font-weight="400" textLength="34.3" lengthAdjust="spacingAndGlyphs" >30.6%</text><circle cx="337.5" cy="583.7" r="3.6" fill="url(#dg2)"/><text x="344.3" y="587.7" font-family="'Liberation Sans', sans-serif" font-size="12" fill="#333" text-anchor="start" font-weight="400" textLength="56.4" lengthAdjust="spacingAndGlyphs" >Max OUT:</text><text x="423.5" y="587.7" font-family="'Liberation Sans', sans-serif" font-size="12" fill="#333" text-anchor="start" font-weight="400" textLength="57.5" lengthAdjust="spacingAndGlyphs" >39.4 kbps</text><rect x="487" y="577.7" width="1" height="12" fill="#ccc"/><text x="503.7" y="587.7" font-family="'Liberation Sans', sans-serif" font-size="12" fill="#333" text-anchor="start" font-weight="400" textLength="34.3" lengthAdjust="spacingAndGlyphs" >62.3%</text><rect x="334" y="598" width="204" height="1.2" fill="#c2c2c2"/><rect x="335" y="615.3" width="5" height="1.5" fill="#444"/><text x="344.3" y="616.8" font-family="'Liberation Sans', sans-serif" font-size="12" fill="#333" text-anchor="start" font-weight="400" textLength="37.8" lengthAdjust="spacingAndGlyphs" >Errors:</text><text x="522.5" y="616.8" font-family="'Liberation Sans', sans-serif" font-size="12" fill="#333" text-anchor="start" font-weight="400" textLength="15.5" lengthAdjust="spacingAndGlyphs" >0%</text><rect x="335" y="633.1999999999999" width="5" height="1.5" fill="#444"/><text x="344.3" y="634.6999999999999" font-family="'Liberation Sans', sans-serif" font-size="12" fill="#333" text-anchor="start" font-weight="400" textLength="52.9" lengthAdjust="spacingAndGlyphs" >Discards:</text><text x="522.5" y="634.6999999999999" font-family="'Liberation Sans', sans-serif" font-size="12" fill="#333" text-anchor="start" font-weight="400" textLength="15.5" lengthAdjust="spacingAndGlyphs" >0%</text><circle cx="337.5" cy="648.5999999999999" r="3.6" fill="#ec8350"/><text x="344.3" y="652.5999999999999" font-family="'Liberation Sans', sans-serif" font-size="12" fill="#333" text-anchor="start" font-weight="400" textLength="26.2" lengthAdjust="spacingAndGlyphs" >CPU:</text><text x="515.5" y="652.5999999999999" font-family="'Liberation Sans', sans-serif" font-size="12" fill="#333" text-anchor="start" font-weight="400" textLength="22.5" lengthAdjust="spacingAndGlyphs" >86%</text><path d="M561.5,557 L561.5,579 L566.2,574.6 L570.2,582.5 L573.6,580.9 L569.8,573.4 L577.5,573.4 Z" fill="#fff" stroke="#111" stroke-width="1.1" stroke-linejoin="round"/></svg>
<div style="left:6px;top:836px;width:1190px;height:30px;background:#a0a0a0;"></div>
<svg style="left:17px;top:845px;" width="15" height="12" viewBox="0 0 15 12"><polyline points="1.5,6 7.5,1.5 13.5,6" fill="none" stroke="#fff" stroke-width="2"/><polyline points="1.5,11 7.5,6.5 13.5,11" fill="none" stroke="#fff" stroke-width="2"/></svg>
<div style="left:1133px;top:836px;width:30px;height:30px;background:#0b7ab1;"></div>
<svg style="left:1141px;top:845px;" width="14" height="14" viewBox="0 0 14 14"><rect x="5" y="0" width="4" height="6.3" fill="#fff"/><polygon points="0.8,6 13.2,6 7,11" fill="#fff"/><rect x="0.5" y="11.5" width="12.8" height="2.2" fill="#fff"/></svg>
<svg style="left:1169.9px;top:840.5px;" width="19" height="19" viewBox="0 0 19 19"><circle cx="9.5" cy="9.5" r="8.7" fill="#f2a81d"/></svg>
<div style="left:1175.42px;top:843.79px;font:700 13px/1 'Liberation Sans', sans-serif;color:#fff;white-space:nowrap;">?</div>
<div style="left:6px;top:866px;width:5px;height:289px;background:#c2c2c2;"></div>
<div style="left:11px;top:866px;width:190px;height:289px;background:#ececec;"></div>
<div style="left:11px;top:866px;width:190px;height:54px;background:#d1d1d1;"></div>
<div style="left:201px;top:866px;width:995px;height:289px;background:#fff;"></div>
<div style="left:27.40px;top:884.14px;font:700 20.5px/1 'Liberation Sans', sans-serif;color:#3d4f5c;white-space:nowrap;transform:scaleX(0.8624);transform-origin:0 0;">Line Availability</div>
<svg style="left:159px;top:877.3px;" width="35" height="35" viewBox="0 0 35 35"><path d="M10.2,18.8 A6.6,6.6 0 1 0 17.5,10.7" fill="none" stroke="#1585ba" stroke-width="2.5" stroke-linecap="round"/><polygon points="12.6,10.7 17.2,6.6 17.2,14.8" fill="#1585ba"/></svg>
<svg style="left:30px;top:936px;" width="16" height="16" viewBox="0 0 16 16"><rect x="0.5" y="0.5" width="14.5" height="14.5" rx="3" fill="#fff" stroke="#9a9a9a" stroke-width="1"/><polyline points="3.6,7.8 6.4,10.6 11.8,4.6" fill="none" stroke="#0f7db5" stroke-width="2.2"/></svg>
<svg style="left:51px;top:935px;" width="16" height="16" viewBox="0 0 16 16"><rect x="1" y="3" width="14" height="12" rx="1.5" fill="none" stroke="#1585ba" stroke-width="1.8"/><rect x="1" y="3" width="14" height="3" fill="#1585ba"/><rect x="3.5" y="0.5" width="2" height="3.5" fill="#1585ba"/><rect x="10.5" y="0.5" width="2" height="3.5" fill="#1585ba"/><polyline points="5,10 7.2,12 11,8.2" fill="none" stroke="#1585ba" stroke-width="1.5"/></svg>
<div style="left:71.60px;top:934.95px;font:400 16px/1 'Liberation Sans', sans-serif;color:#1585ba;white-space:nowrap;transform:scaleX(0.9043);transform-origin:0 0;">Summary</div>
<div style="left:26px;top:964px;width:160px;height:1px;background:#c8c8c8;"></div>
<svg style="left:17px;top:984.5px;" width="8" height="8" viewBox="0 0 8 8"><polygon points="0,0 8,4 0,8" fill="#1585ba"/></svg>
<svg style="left:30px;top:980px;" width="16" height="16" viewBox="0 0 16 16"><rect x="0.5" y="0.5" width="14.5" height="14.5" rx="3" fill="#fff" stroke="#9a9a9a" stroke-width="1"/><polyline points="3.6,7.8 6.4,10.6 11.8,4.6" fill="none" stroke="#0f7db5" stroke-width="2.2"/></svg>
<svg style="left:51px;top:982px;" width="15" height="13" viewBox="0 0 15 13"><path d="M7.5,1.6 L13.7,11.7 L1.3,11.7 Z" fill="#d9534f" stroke="#d9534f" stroke-width="2.4" stroke-linejoin="round"/><path d="M6.6,3.5 L8.4,3.5 L8.1,8.8 L6.9,8.8 Z" fill="#fff"/><rect x="6.7" y="9.8" width="1.6" height="1.7" fill="#fff"/></svg>
<div style="left:72.00px;top:981.05px;font:400 16px/1 'Liberation Sans', sans-serif;color:#1585ba;white-space:nowrap;transform:scaleX(0.9211);transform-origin:0 0;">Impacting (12)</div>
<svg style="left:17px;top:1010.5px;" width="8" height="8" viewBox="0 0 8 8"><polygon points="0,0 8,4 0,8" fill="#1585ba"/></svg>
<svg style="left:30px;top:1006px;" width="16" height="16" viewBox="0 0 16 16"><rect x="0.5" y="0.5" width="14.5" height="14.5" rx="3" fill="#fff" stroke="#9a9a9a" stroke-width="1"/><polyline points="3.6,7.8 6.4,10.6 11.8,4.6" fill="none" stroke="#0f7db5" stroke-width="2.2"/></svg>
<svg style="left:51px;top:1008px;" width="15" height="13" viewBox="0 0 15 13"><path d="M7.5,1.6 L13.7,11.7 L1.3,11.7 Z" fill="#44535e" stroke="#44535e" stroke-width="2.4" stroke-linejoin="round"/><path d="M6.6,3.5 L8.4,3.5 L8.1,8.8 L6.9,8.8 Z" fill="#fff"/><rect x="6.7" y="9.8" width="1.6" height="1.7" fill="#fff"/></svg>
<div style="left:72.00px;top:1007.05px;font:400 16px/1 'Liberation Sans', sans-serif;color:#1585ba;white-space:nowrap;transform:scaleX(0.8891);transform-origin:0 0;">Exclusions</div>
<svg style="left:17px;top:1036.5px;" width="8" height="8" viewBox="0 0 8 8"><polygon points="0,0 8,4 0,8" fill="#1585ba"/></svg>
<svg style="left:30px;top:1032px;" width="16" height="16" viewBox="0 0 16 16"><rect x="0.5" y="0.5" width="14.5" height="14.5" rx="3" fill="#fff" stroke="#9a9a9a" stroke-width="1"/><rect x="4" y="6.8" width="7.5" height="2.2" fill="#0f7db5"/></svg>
<svg style="left:50.7px;top:1032.0px;" width="15.0" height="15.0" viewBox="0 0 15.0 15.0"><circle cx="7.5" cy="7.5" r="7.5" fill="#9aab3c"/><rect x="6.3" y="6.0" width="2.4" height="7.1" fill="#fff"/><circle cx="7.5" cy="3.8" r="1.3" fill="#fff"/></svg>
<div style="left:72.00px;top:1033.05px;font:400 16px/1 'Liberation Sans', sans-serif;color:#1585ba;white-space:nowrap;transform:scaleX(0.8415);transform-origin:0 0;">Non-impacting (24)</div>
<div style="left:26px;top:1062px;width:160px;height:1px;background:#c8c8c8;"></div>
<svg style="left:30px;top:1126px;" width="16" height="16" viewBox="0 0 16 16"><rect x="0.5" y="0.5" width="14.5" height="14.5" rx="3" fill="#fff" stroke="#9a9a9a" stroke-width="1"/></svg>
<svg style="left:51px;top:1128px;" width="16" height="11" viewBox="0 0 16 11"><rect x="0" y="0" width="16" height="11" rx="2" fill="#1585ba"/><rect x="1.5" y="3.3" width="2.6" height="1.9" fill="#ececec"/><rect x="5.0" y="3.3" width="2.6" height="1.9" fill="#ececec"/><rect x="8.5" y="3.3" width="2.6" height="1.9" fill="#ececec"/><rect x="12.0" y="3.3" width="2.6" height="1.9" fill="#ececec"/><rect x="1.5" y="6.2" width="2.6" height="1.9" fill="#ececec"/><rect x="5.0" y="6.2" width="2.6" height="1.9" fill="#ececec"/><rect x="8.5" y="6.2" width="2.6" height="1.9" fill="#ececec"/><rect x="12.0" y="6.2" width="2.6" height="1.9" fill="#ececec"/><rect x="1.5" y="9.1" width="2.6" height="1.9" fill="#ececec"/><rect x="5.0" y="9.1" width="2.6" height="1.9" fill="#ececec"/><rect x="8.5" y="9.1" width="2.6" height="1.9" fill="#ececec"/><rect x="12.0" y="9.1" width="2.6" height="1.9" fill="#ececec"/></svg>
<div style="left:72.00px;top:1125.05px;font:400 16px/1 'Liberation Sans', sans-serif;color:#1585ba;white-space:nowrap;transform:scaleX(0.9242);transform-origin:0 0;">Event list</div>
<div style="left:372.00px;top:907.60px;font:700 30px/1 'Liberation Sans', sans-serif;color:#d9534f;white-space:nowrap;transform:scaleX(0.9829);transform-origin:0 0;">1<span style="font-size:13.5px;font-weight:400;margin:0 3px">h</span>51<span style="font-size:13.5px;font-weight:400;margin:0 3px">m</span></div>
<div style="left:395.50px;top:889.97px;font:400 13.5px/1 'Liberation Sans', sans-serif;color:#777;white-space:nowrap;transform:scaleX(0.9055);transform-origin:0 0;">Impacting</div>
<svg style="left:376px;top:889px;" width="15" height="13" viewBox="0 0 15 13"><path d="M7.5,1.6 L13.7,11.7 L1.3,11.7 Z" fill="#f0a5a3" stroke="#f0a5a3" stroke-width="2.4" stroke-linejoin="round"/><path d="M6.6,3.5 L8.4,3.5 L8.1,8.8 L6.9,8.8 Z" fill="#fff"/><rect x="6.7" y="9.8" width="1.6" height="1.7" fill="#fff"/></svg>
<div style="left:459.5px;top:887px;width:1px;height:52px;background:#d5d5d5;"></div>
<div style="left:662.00px;top:907.60px;font:700 30px/1 'Liberation Sans', sans-serif;color:#3f4e5a;white-space:nowrap;transform:scaleX(0.9683);transform-origin:0 0;">0<span style="font-size:13.5px;font-weight:400;margin:0 3px">s</span></div>
<div style="left:631.60px;top:889.97px;font:400 13.5px/1 'Liberation Sans', sans-serif;color:#777;white-space:nowrap;transform:scaleX(0.8678);transform-origin:0 0;">Exclusions</div>
<svg style="left:612px;top:889px;" width="15" height="13" viewBox="0 0 15 13"><path d="M7.5,1.6 L13.7,11.7 L1.3,11.7 Z" fill="#a3abb1" stroke="#a3abb1" stroke-width="2.4" stroke-linejoin="round"/><path d="M6.6,3.5 L8.4,3.5 L8.1,8.8 L6.9,8.8 Z" fill="#fff"/><rect x="6.7" y="9.8" width="1.6" height="1.7" fill="#fff"/></svg>
<div style="left:698px;top:887px;width:1px;height:52px;background:#d5d5d5;"></div>
<div style="left:901.00px;top:907.60px;font:700 30px/1 'Liberation Sans', sans-serif;color:#a3b145;white-space:nowrap;transform:scaleX(0.9835);transform-origin:0 0;">0<span style="font-size:13.5px;font-weight:400;margin:0 3px">s</span></div>
<div style="left:845.90px;top:889.97px;font:400 13.5px/1 'Liberation Sans', sans-serif;color:#777;white-space:nowrap;transform:scaleX(0.9305);transform-origin:0 0;">Non-impacting</div>
<svg style="left:823.9px;top:888.8px;" width="15.2" height="15.2" viewBox="0 0 15.2 15.2"><circle cx="7.6" cy="7.6" r="7.6" fill="#c5d19a"/><rect x="6.3999999999999995" y="6.1" width="2.4" height="7.2" fill="#fff"/><circle cx="7.6" cy="3.8999999999999995" r="1.3" fill="#fff"/></svg>
<div style="left:936.5px;top:887px;width:1px;height:52px;background:#d5d5d5;"></div>
<div style="left:948.00px;top:907.60px;font:700 30px/1 'Liberation Sans', sans-serif;color:#3f4e5a;white-space:nowrap;transform:scaleX(1.0142);transform-origin:0 0;">98.648<span style="font-size:13.5px;font-weight:400;margin:0 3px">%</span></div>
<div style="left:1057.00px;top:907.60px;font:700 30px/1 'Liberation Sans', sans-serif;color:#3f4e5a;white-space:nowrap;transform:scaleX(1.0161);transform-origin:0 0;">98.648<span style="font-size:13.5px;font-weight:400;margin:0 3px">%</span></div>
<div style="left:992.00px;top:889.97px;font:400 13.5px/1 'Liberation Sans', sans-serif;color:#777;white-space:nowrap;transform:scaleX(0.9169);transform-origin:0 0;">Operational</div>
<div style="left:1117.00px;top:889.97px;font:400 13.5px/1 'Liberation Sans', sans-serif;color:#777;white-space:nowrap;transform:scaleX(0.9135);transform-origin:0 0;">Adjusted</div>
<div style="left:1175.5px;top:887px;width:1px;height:52px;background:#d5d5d5;"></div>
<div style="left:221px;top:958.5px;width:956px;height:1px;background:#d8d8d8;"></div>
<svg style="left:201px;top:866px" width="995" height="289" viewBox="201 866 995 289"><rect x="308.2" y="991" width="111" height="110.7" fill="#f2f2f2"/><rect x="1003" y="991" width="111" height="110.7" fill="#f2f2f2"/><rect x="307" y="1012" width="809" height="3" fill="#d9534f"/><rect x="308" y="1043.7" width="808" height="1.1" fill="#7b7b7b"/><rect x="308" y="1080.5" width="808" height="1.2" fill="#cbd9a6"/><rect x="308" y="1106.5" width="808" height="1.2" fill="#cfcfcf"/><rect x="307" y="1005" width="5.4" height="16.8" fill="#d9534f"/><rect x="325.6" y="1005" width="5.4" height="16.8" fill="#f0a51c"/><rect x="422.6" y="1005" width="5.4" height="16.8" fill="#d9534f"/><rect x="441.6" y="1005" width="5.4" height="16.8" fill="#f0a51c"/><rect x="537.7" y="1005" width="5.4" height="16.8" fill="#d9534f"/><rect x="556.4" y="1005" width="5.4" height="16.8" fill="#f0a51c"/><rect x="653.3" y="1005" width="5.4" height="16.8" fill="#d9534f"/><rect x="672.4" y="1005" width="5.4" height="16.8" fill="#f0a51c"/><rect x="768.5" y="1005" width="5.4" height="16.8" fill="#d9534f"/><rect x="788.2" y="1005" width="5.4" height="16.8" fill="#f0a51c"/><rect x="884.5" y="1005" width="5.4" height="16.8" fill="#d9534f"/><rect x="903.4" y="1005" width="5.4" height="16.8" fill="#f0a51c"/><rect x="325.6" y="1075" width="5.6" height="12" fill="#2bb394"/><rect x="336" y="1075" width="5.6" height="12" fill="#2bb394"/><rect x="441.6" y="1075" width="5.6" height="12" fill="#2bb394"/><rect x="450.7" y="1075" width="5.6" height="12" fill="#2bb394"/><rect x="556.4" y="1075" width="5.6" height="12" fill="#2bb394"/><rect x="566.7" y="1075" width="5.6" height="12" fill="#2bb394"/><rect x="672.4" y="1075" width="5.6" height="12" fill="#2bb394"/><rect x="682.7" y="1075" width="5.6" height="12" fill="#2bb394"/><rect x="773.5" y="1075" width="5.6" height="12" fill="#2bb394"/><rect x="788" y="1075" width="5.6" height="12" fill="#2bb394"/><rect x="797.5" y="1075" width="5.6" height="12" fill="#2bb394"/><rect x="903.4" y="1075" width="5.6" height="12" fill="#2bb394"/><rect x="913.4" y="1075" width="5.6" height="12" fill="#2bb394"/><text x="362.6" y="1126" font-family="'Liberation Mono', monospace" font-size="11" fill="#555" text-anchor="middle" font-weight="400" >Sunday</text><text x="472.6" y="1126" font-family="'Liberation Mono', monospace" font-size="11" fill="#555" text-anchor="middle" font-weight="400" >Monday</text><text x="589" y="1126" font-family="'Liberation Mono', monospace" font-size="11" fill="#555" text-anchor="middle" font-weight="400" >Tuesday</text><text x="704.5" y="1126" font-family="'Liberation Mono', monospace" font-size="11" fill="#555" text-anchor="middle" font-weight="400" >Wednesday</text><text x="819.7" y="1126" font-family="'Liberation Mono', monospace" font-size="11" fill="#555" text-anchor="middle" font-weight="400" >Thursday</text><text x="935.2" y="1126" font-family="'Liberation Mono', monospace" font-size="11" fill="#555" text-anchor="middle" font-weight="400" >Friday</text><text x="1051.2" y="1126" font-family="'Liberation Mono', monospace" font-size="11" fill="#555" text-anchor="middle" font-weight="400" >Saturday</text><text transform="translate(254,1061) rotate(-90)" font-family="'Liberation Sans', sans-serif" font-size="12" fill="#555" textLength="36" lengthAdjust="spacingAndGlyphs">Events</text></svg>
<svg style="left:287px;top:1001.5px;" width="15" height="13" viewBox="0 0 15 13"><path d="M7.5,1.6 L13.7,11.7 L1.3,11.7 Z" fill="#d9534f" stroke="#d9534f" stroke-width="2.4" stroke-linejoin="round"/><path d="M6.6,3.5 L8.4,3.5 L8.1,8.8 L6.9,8.8 Z" fill="#fff"/><rect x="6.7" y="9.8" width="1.6" height="1.7" fill="#fff"/></svg>
<svg style="left:287px;top:1032px;" width="15" height="13" viewBox="0 0 15 13"><path d="M7.5,1.6 L13.7,11.7 L1.3,11.7 Z" fill="#44535e" stroke="#44535e" stroke-width="2.4" stroke-linejoin="round"/><path d="M6.6,3.5 L8.4,3.5 L8.1,8.8 L6.9,8.8 Z" fill="#fff"/><rect x="6.7" y="9.8" width="1.6" height="1.7" fill="#fff"/></svg>
<svg style="left:287.2px;top:1068.9px;" width="15.2" height="15.2" viewBox="0 0 15.2 15.2"><circle cx="7.6" cy="7.6" r="7.6" fill="#9aab3c"/><rect x="6.3999999999999995" y="6.1" width="2.4" height="7.2" fill="#fff"/><circle cx="7.6" cy="3.8999999999999995" r="1.3" fill="#fff"/></svg>
</body></html>
